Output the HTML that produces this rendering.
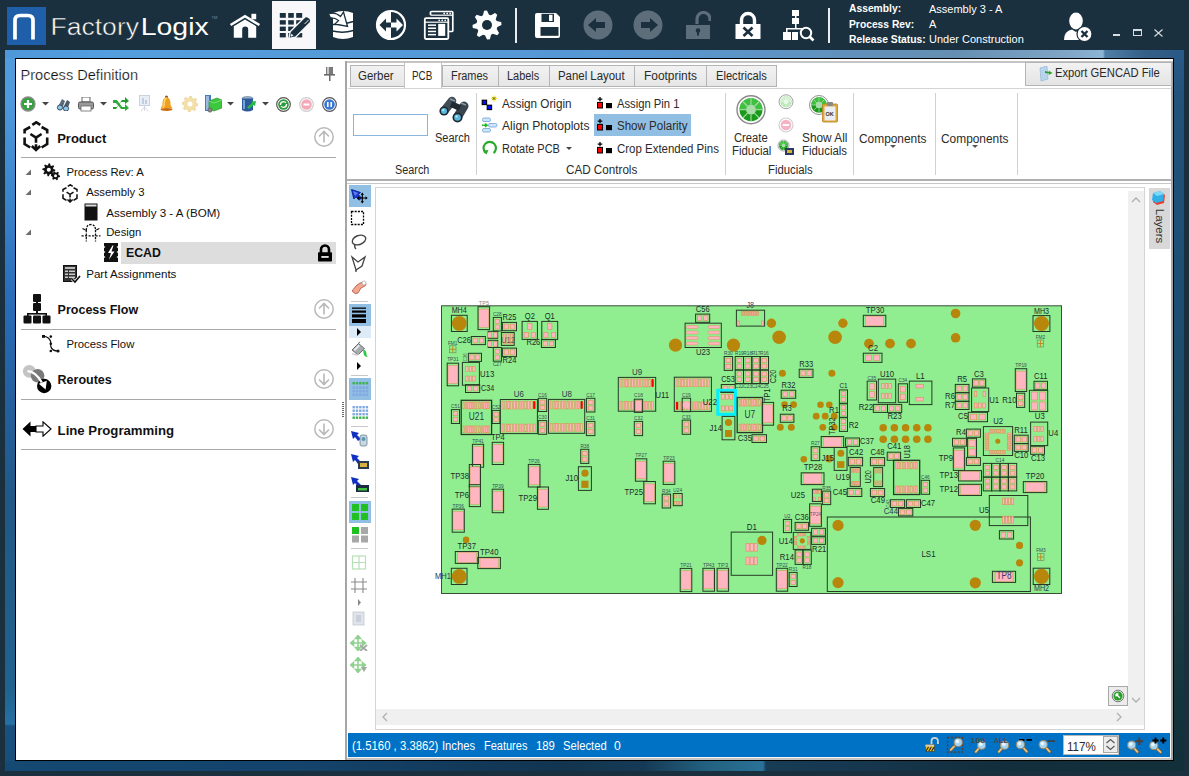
<!DOCTYPE html>
<html><head><meta charset="utf-8"><style>
html,body{margin:0;padding:0;}
body{width:1189px;height:776px;position:relative;overflow:hidden;background:#1a303e;font-family:"Liberation Sans", sans-serif;}
svg text{font-family:"Liberation Sans", sans-serif;}
</style></head><body>
<div style="position:absolute;left:5px;top:50px;width:1179px;height:721px;background:#245a92;"></div><div style="position:absolute;left:5px;top:50px;width:10px;height:721px;background:linear-gradient(180deg,#519cdc 0px,#4f9adc 50px,#3a84ca 150px,#296cb8 250px,#24609e 350px,#225886 450px,#215e8a 560px,#20638e 640px,#2670a2 674px,#19507e 676px,#194e7a 721px);"></div><div style="position:absolute;left:5px;top:50px;width:1179px;height:8px;background:linear-gradient(90deg,#4e98da 0px,#539ede 99px,#5697d4 599px,#658fb2 949px,#7ea5c6 1059px,#8cb4d4 1098px,#4f7fa8 1100px,#356088 1139px,#2a5682 1179px);"></div><div style="position:absolute;left:1174px;top:50px;width:10px;height:721px;background:linear-gradient(180deg,#2a5a88 0px,#22527a 50px,#1c4e72 250px,#1d4a60 400px,#1e3e46 550px,#12323c 670px,#12303a 721px);"></div><div style="position:absolute;left:5px;top:761px;width:1179px;height:10px;background:linear-gradient(90deg,#154a74 0px,#144870 39px,#14436c 295px,#12344f 559px,#163a55 639px,#22607f 700px,#2a7298 758px,#173c54 761px,#163850 839px,#132e3c 999px,#12303a 1179px);"></div><div style="position:absolute;left:15px;top:58px;width:1159px;height:703px;background:#fff;border:1px solid #000;box-sizing:border-box;"></div><div style="position:absolute;left:7px;top:7px;width:39px;height:38px;background:#1f5fa9;"></div><svg style="position:absolute;left:7px;top:7px;" width="39" height="38" viewBox="0 0 39 38"><path d="M8 32.5 V13.5 Q8 8.5 13 8.5 H21 Q26 8.5 26 13.5 V32.5" fill="none" stroke="#fff" stroke-width="3.7"/></svg><svg style="position:absolute;left:48px;top:10px" width="175" height="34" viewBox="0 0 175 34"><text x="2.5" y="24.8" font-size="23" fill="#fff" stroke="#1a303e" stroke-width="0.5" textLength="88.5" lengthAdjust="spacingAndGlyphs">Factory</text><text x="92.7" y="24.8" font-size="23" fill="#fff" textLength="68" lengthAdjust="spacingAndGlyphs">Logix</text><text x="163.5" y="9" font-size="4" fill="#889">TM</text></svg><svg style="position:absolute;left:229px;top:12px;" width="32" height="27" viewBox="0 0 32 27"><path d="M1.6 13 L16 4.2 L30.4 13" fill="none" stroke="#ffffff" stroke-width="2.6" stroke-linejoin="miter"/><rect x="22.4" y="1.8" width="4.8" height="5.5" fill="#ffffff"/><path d="M4.8 14.2 L16 7.6 L27.2 14.2 V25.8 H19.2 V17.5 Q19.2 14.6 16.2 14.6 Q13.2 14.6 13.2 17.5 V25.8 H4.8 Z" fill="#ffffff"/></svg><div style="position:absolute;left:272px;top:1px;width:44px;height:48px;background:#f8f8fb;"></div><svg style="position:absolute;left:279px;top:12px;" width="33" height="28" viewBox="0 0 33 28"><rect x="0.8" y="1" width="6.0" height="4.8" fill="#1a303e"/><rect x="0.8" y="8.2" width="6.0" height="4.4" fill="#1a303e"/><rect x="0.8" y="14.6" width="6.0" height="4.4" fill="#1a303e"/><rect x="0.8" y="21" width="6.0" height="4.4" fill="#1a303e"/><rect x="9.2" y="1" width="5.6" height="4.8" fill="#1a303e"/><rect x="9.2" y="8.2" width="5.6" height="4.4" fill="#1a303e"/><rect x="9.2" y="14.6" width="5.6" height="4.4" fill="#1a303e"/><rect x="9.2" y="21" width="5.6" height="4.4" fill="#1a303e"/><rect x="17.2" y="1" width="6.0" height="4.8" fill="#1a303e"/><rect x="17.2" y="8.2" width="6.0" height="4.4" fill="#1a303e"/><rect x="17.2" y="14.6" width="6.0" height="4.4" fill="#1a303e"/><rect x="17.2" y="21" width="6.0" height="4.4" fill="#1a303e"/><path d="M10.8 25.6 L16.29 24.47 L30.85 10.08 Q31.5 8.5 30.5 7.2 L29.5 6.2 Q28 5 26.35 5.53 L11.79 19.92 Z" fill="#f8f8fb" stroke="#f8f8fb" stroke-width="2.6" stroke-linejoin="round"/><path d="M10.8 25.6 L16.29 24.47 L30.85 10.08 Q31.5 8.5 30.5 7.2 L29.5 6.2 Q28 5 26.35 5.53 L11.79 19.92 Z" fill="#1a303e"/><path d="M25.6 12 L29.6 8" stroke="#f8f8fb" stroke-width="0.9"/><path d="M10.8 25.6 L12.6 21.8 L14.4 23.6 Z" fill="#f8f8fb"/><path d="M10.8 25.6 L11.6 23.8 L12.5 24.7 Z" fill="#1a303e"/></svg><svg style="position:absolute;left:328px;top:9px;" width="27" height="31" viewBox="0 0 27 31"><path d="M5 4 Q15 0 25 4 V28 Q15 32 5 28 Z" fill="#ffffff"/><path d="M4.5 15.5 Q15 16 25.5 12.5 M4.5 22 Q15 24.5 25.5 21.5" fill="none" stroke="#1a303e" stroke-width="1.5"/><path d="M0.5 5 Q7 2.5 12.5 7.5 L15.5 3 L19.5 17.5 L7 15 L10.5 11.5 Q6.5 8.5 2.5 9 Z" fill="#ffffff" stroke="#1a303e" stroke-width="1.3" stroke-linejoin="miter"/></svg><svg style="position:absolute;left:375px;top:9px;" width="32" height="32" viewBox="0 0 32 32"><circle cx="16" cy="16" r="14" fill="none" stroke="#ffffff" stroke-width="2.2"/><path d="M16 2 A14 14 0 0 0 16 30 Z" fill="#ffffff"/><path d="M4.5 16 L11 9.5 V13.5 H16 V18.5 H11 V22.5 Z" fill="#1a303e"/><path d="M28 16 L21.5 9.5 V13.5 H16 V18.5 H21.5 V22.5 Z" fill="#ffffff"/></svg><svg style="position:absolute;left:423px;top:9px;" width="32" height="32" viewBox="0 0 32 32"><path d="M7.5 6 V3.5 Q7.5 2.5 8.5 2.5 H28.8 Q29.8 2.5 29.8 3.5 V21.5 Q29.8 22.5 28.8 22.5 H26" fill="none" stroke="#ffffff" stroke-width="1.7"/><path d="M7.5 6.2 H29.8" stroke="#ffffff" stroke-width="1.2"/><circle cx="21.2" cy="4.4" r="0.9" fill="#ffffff"/><circle cx="24.2" cy="4.4" r="0.9" fill="#ffffff"/><circle cx="27.2" cy="4.4" r="0.9" fill="#ffffff"/><rect x="1.8" y="9.2" width="23.5" height="20.8" rx="1.2" fill="#1a303e" stroke="#ffffff" stroke-width="1.8"/><path d="M1.8 13.2 H25.3" stroke="#ffffff" stroke-width="1.2"/><circle cx="16.2" cy="11.3" r="0.9" fill="#ffffff"/><circle cx="19.2" cy="11.3" r="0.9" fill="#ffffff"/><circle cx="22.2" cy="11.3" r="0.9" fill="#ffffff"/><rect x="5" y="15.4" width="8" height="1.5" fill="#ffffff"/><rect x="5" y="18.5" width="8" height="1.5" fill="#ffffff"/><rect x="5" y="21.7" width="8" height="1.5" fill="#ffffff"/><rect x="5" y="24.9" width="8" height="1.5" fill="#ffffff"/><rect x="15.2" y="14.9" width="7" height="12" fill="#ffffff"/></svg><svg style="position:absolute;left:472px;top:10px;" width="30" height="30" viewBox="0 0 30 30"><polygon points="29.21,12.12 29.50,14.95 25.31,17.01 24.72,18.98 27.09,23.01 25.29,25.22 20.87,23.71 19.05,24.69 17.88,29.21 15.05,29.50 12.99,25.31 11.02,24.72 6.99,27.09 4.78,25.29 6.29,20.87 5.31,19.05 0.79,17.88 0.50,15.05 4.69,12.99 5.28,11.02 2.91,6.99 4.71,4.78 9.13,6.29 10.95,5.31 12.12,0.79 14.95,0.50 17.01,4.69 18.98,5.28 23.01,2.91 25.22,4.71 23.71,9.13 24.69,10.95" fill="#ffffff"/><circle cx="15" cy="15" r="5" fill="#1a303e"/></svg><div style="position:absolute;left:515px;top:8px;width:1.5px;height:35px;background:#e8ecf0;"></div><svg style="position:absolute;left:535px;top:13px;" width="26" height="25" viewBox="0 0 26 25"><path d="M0 2 Q0 0 2 0 H21 L25 4 V23 Q25 25 23 25 H2 Q0 25 0 23 Z" fill="#ffffff"/><rect x="6.5" y="0.8" width="12.5" height="8.2" fill="#1a303e"/><rect x="14" y="1.8" width="3.5" height="6.2" fill="#ffffff"/><rect x="5.5" y="14" width="18" height="8.8" fill="#1a303e"/></svg><svg style="position:absolute;left:583px;top:10px;" width="30" height="30" viewBox="0 0 30 30"><circle cx="15" cy="15" r="14.5" fill="#5d6d7a"/><path d="M5 15 L13 8 V12 H22 V18 H13 V22 Z" fill="#1a303e"/></svg><svg style="position:absolute;left:633px;top:10px;" width="30" height="30" viewBox="0 0 30 30"><circle cx="15" cy="15" r="14.5" fill="#5d6d7a"/><path d="M25 15 L17 8 V12 H8 V18 H17 V22 Z" fill="#1a303e"/></svg><svg style="position:absolute;left:685px;top:11px;" width="26" height="29" viewBox="0 0 26 29"><path d="M12 13 V8 A6.5 6.5 0 0 1 25 8 V10" fill="none" stroke="#5d6d7a" stroke-width="3.2"/><rect x="1" y="14" width="24" height="14" fill="#5d6d7a"/><circle cx="13" cy="19.5" r="2.3" fill="#1a303e"/><rect x="12" y="20" width="2" height="4.5" fill="#1a303e"/></svg><svg style="position:absolute;left:735px;top:11px;" width="26" height="29" viewBox="0 0 26 29"><path d="M6.5 14 V9 A6.5 6.5 0 0 1 19.5 9 V14" fill="none" stroke="#ffffff" stroke-width="3.4"/><rect x="0.5" y="13" width="25" height="15" fill="#ffffff"/><path d="M8.5 16.5 L17.5 25 M17.5 16.5 L8.5 25" stroke="#1a303e" stroke-width="2.6"/></svg><svg style="position:absolute;left:782px;top:9px;" width="33" height="33" viewBox="0 0 33 33"><rect x="10" y="1" width="7" height="6" fill="#ffffff"/><rect x="10" y="9" width="7" height="6" fill="#ffffff"/><rect x="13" y="7" width="1.5" height="2" fill="#ffffff"/><rect x="13" y="15" width="1.5" height="4" fill="#ffffff"/><rect x="4" y="19" width="16" height="1.5" fill="#ffffff"/><rect x="4" y="19" width="1.5" height="4" fill="#ffffff"/><rect x="1" y="23" width="8" height="8" fill="#ffffff"/><rect x="10" y="23" width="6" height="8" fill="#ffffff"/><circle cx="24" cy="24" r="5.2" fill="#1a303e" stroke="#ffffff" stroke-width="2"/><path d="M27.5 27.5 L31.5 31.5" stroke="#ffffff" stroke-width="2.6"/></svg><div style="position:absolute;left:828px;top:8px;width:1.5px;height:35px;background:#e8ecf0;"></div><div style="position:absolute;top:4.18px;font-size:10.3px;line-height:10.3px;color:#fff;font-weight:bold;white-space:nowrap;left:849px;">Assembly:</div><div style="position:absolute;top:19.68px;font-size:10.3px;line-height:10.3px;color:#fff;font-weight:bold;white-space:nowrap;left:849px;">Process Rev:</div><div style="position:absolute;top:34.68px;font-size:10.3px;line-height:10.3px;color:#fff;font-weight:bold;white-space:nowrap;left:849px;">Release Status:</div><div style="position:absolute;top:3.59px;font-size:11px;line-height:11px;color:#fff;font-weight:normal;white-space:nowrap;left:929px;">Assembly 3 - A</div><div style="position:absolute;top:19.09px;font-size:11px;line-height:11px;color:#fff;font-weight:normal;white-space:nowrap;left:929px;">A</div><div style="position:absolute;top:34.09px;font-size:11px;line-height:11px;color:#fff;font-weight:normal;white-space:nowrap;left:929px;">Under Construction</div><svg style="position:absolute;left:1063px;top:12px;" width="30" height="30" viewBox="0 0 30 30"><ellipse cx="13" cy="9" rx="6.8" ry="8.5" fill="#ffffff"/><path d="M1 28 Q1 19 9 17.5 L13 20 L17 17.5 Q22 18.5 24 22 L22 28 Z" fill="#ffffff"/><circle cx="21.5" cy="22" r="7.5" fill="#ffffff" stroke="#1a303e" stroke-width="1.2"/><path d="M18.5 19 L24.5 25 M24.5 19 L18.5 25" stroke="#1a303e" stroke-width="2.4"/></svg><div style="position:absolute;left:1113px;top:34px;width:7px;height:2px;background:#d8dce0;"></div><div style="position:absolute;left:1133px;top:29px;width:9px;height:7px;border:1.3px solid #d8dce0;border-top-width:2.2px;box-sizing:border-box;"></div><svg style="position:absolute;left:1154px;top:29px;" width="9" height="8" viewBox="0 0 9 8"><path d="M0.5 0.5 L8.5 7.5 M8.5 0.5 L0.5 7.5" stroke="#d8dce0" stroke-width="1.1"/></svg><svg style="position:absolute;left:18px;top:64px" width="130" height="22"><text x="2.5" y="16.2" font-size="15" fill="#111" stroke="#fff" stroke-width="0.22" textLength="117.5" lengthAdjust="spacingAndGlyphs">Process Definition</text></svg><svg style="position:absolute;left:323px;top:67px;" width="13" height="14" viewBox="0 0 13 14"><rect x="3" y="0" width="7" height="7" fill="#7a7a7a"/><rect x="4" y="0" width="2" height="7" fill="#c8c8c8"/><rect x="1" y="7" width="11" height="1.6" fill="#6a6a6a"/><rect x="6" y="8" width="1.5" height="6" fill="#6a6a6a"/></svg><svg style="position:absolute;left:20px;top:96px;" width="16" height="16" viewBox="0 0 16 16"><circle cx="8" cy="8" r="7" fill="#3aa040" stroke="#8a8a8a" stroke-width="1.3"/><path d="M8 4 V12 M4 8 H12" stroke="#fff" stroke-width="2.2"/></svg><svg style="position:absolute;left:42px;top:102px;" width="7" height="4" viewBox="0 0 7 4"><path d="M0 0 H7 L3.5 3.5 Z" fill="#444"/></svg><svg style="position:absolute;left:56px;top:97px;" width="15" height="14" viewBox="0 0 15 14"><path d="M2 10 L6 2 L9 4 L6 12 Z" fill="#5a6a7a"/><path d="M7 11 L11 3 L14 5 L11 13 Z" fill="#4a5a6a"/><circle cx="4" cy="10.5" r="2.6" fill="#8ec8ec" stroke="#3a4a5a" stroke-width="1"/><circle cx="10" cy="11.5" r="2.6" fill="#8ec8ec" stroke="#3a4a5a" stroke-width="1"/></svg><svg style="position:absolute;left:78px;top:97px;" width="16" height="15" viewBox="0 0 16 15"><rect x="4" y="0" width="8" height="5" fill="#fff" stroke="#666" stroke-width="1"/><rect x="0.5" y="5" width="15" height="7" rx="1.5" fill="#9a9a9a" stroke="#555" stroke-width="1"/><rect x="3" y="9" width="10" height="5" fill="#fff" stroke="#666" stroke-width="0.8"/></svg><svg style="position:absolute;left:100px;top:102px;" width="7" height="4" viewBox="0 0 7 4"><path d="M0 0 H7 L3.5 3.5 Z" fill="#444"/></svg><svg style="position:absolute;left:113px;top:97px;" width="16" height="14" viewBox="0 0 16 14"><path d="M0 3 H4 L9 10 H12 V7 L16 11 L12 14 V12 H8 L3 6 H0 Z" fill="#2eaa3a"/><path d="M0 10 H4 L9 3 H12 V0 L16 4 L12 7 V5 H8 L3 12 H0 Z" fill="#22992e"/></svg><svg style="position:absolute;left:139px;top:95px;" width="11" height="17" viewBox="0 0 11 17"><rect x="0.5" y="0.5" width="10" height="10" fill="#e8eef4" stroke="#c8d4e0"/><rect x="3" y="3" width="2" height="6" fill="#c0cfe0"/><rect x="6" y="5" width="2" height="4" fill="#c0cfe0"/><path d="M5.5 10.5 V16 M5.5 12 L2 16 M5.5 12 L9 16" stroke="#ccd" stroke-width="0.8"/></svg><svg style="position:absolute;left:160px;top:95px;" width="13" height="17" viewBox="0 0 13 17"><circle cx="6.5" cy="2" r="1.6" fill="#8a5a20"/><path d="M6.5 2 Q2 3 2.5 10 L0.5 13.5 H12.5 L10.5 10 Q11 3 6.5 2 Z" fill="#f0a020"/><path d="M6.5 3 Q4 4 4.2 10 L3 13" stroke="#ffd870" stroke-width="1.4" fill="none"/><ellipse cx="6.5" cy="14.5" rx="6" ry="1.5" fill="#c86a10"/></svg><svg style="position:absolute;left:182px;top:96px;" width="16" height="16" viewBox="0 0 16 16"><polygon points="16.00,8.00 15.85,9.56 13.36,10.22 12.82,11.22 13.66,13.66 12.44,14.65 10.22,13.36 9.13,13.69 8.00,16.00 6.44,15.85 5.78,13.36 4.78,12.82 2.34,13.66 1.35,12.44 2.64,10.22 2.31,9.13 0.00,8.00 0.15,6.44 2.64,5.78 3.18,4.78 2.34,2.34 3.56,1.35 5.78,2.64 6.87,2.31 8.00,0.00 9.56,0.15 10.22,2.64 11.22,3.18 13.66,2.34 14.65,3.56 13.36,5.78 13.69,6.87" fill="#f5dfa8" stroke="#e8cc88" stroke-width="0.6"/><circle cx="8" cy="8" r="2.5" fill="#fff"/></svg><svg style="position:absolute;left:204px;top:95px;" width="18" height="18" viewBox="0 0 18 18"><rect x="1" y="0" width="6" height="16" fill="#4a7ac0"/><rect x="2" y="1" width="3" height="14" fill="#9ab8e0"/><path d="M5 6 L13 3 L18 5 V13 L10 16 L5 14 Z" fill="#3cc83c" stroke="#2a8a2a" stroke-width="0.6"/><path d="M5 6 L10 8 L18 5" stroke="#8ae08a" stroke-width="0.8" fill="none"/><circle cx="6" cy="15" r="2.2" fill="#888" stroke="#555" stroke-width="0.6"/></svg><svg style="position:absolute;left:226.6px;top:102px;" width="7" height="4" viewBox="0 0 7 4"><path d="M0 0 H7 L3.5 3.5 Z" fill="#444"/></svg><svg style="position:absolute;left:241px;top:96px;" width="15" height="17" viewBox="0 0 15 17"><ellipse cx="6.5" cy="2.5" rx="5.5" ry="2" fill="#9ab0c8" stroke="#5a7090" stroke-width="0.6"/><path d="M1 2.5 V14 Q6.5 17 12 14 V2.5" fill="#2a5a9a"/><path d="M3 4 V13" stroke="#8ac0f0" stroke-width="1.5"/><path d="M6 11 L11 7 L10 5.5 L15 5 L14 10 L12.5 9 L8 13 Z" fill="#2ab84a"/></svg><svg style="position:absolute;left:262px;top:102px;" width="7" height="4" viewBox="0 0 7 4"><path d="M0 0 H7 L3.5 3.5 Z" fill="#444"/></svg><svg style="position:absolute;left:276px;top:97px;" width="15" height="15" viewBox="0 0 15 15"><circle cx="7.5" cy="7.5" r="6.8" fill="none" stroke="#555" stroke-width="1.2"/><circle cx="7.5" cy="7.5" r="5.3" fill="#2a9a3a"/><path d="M4.5 8 A3 3 0 0 1 10 6 M10.5 7 A3 3 0 0 1 5 9" stroke="#fff" stroke-width="1.3" fill="none"/></svg><svg style="position:absolute;left:299px;top:97px;" width="15" height="15" viewBox="0 0 15 15"><circle cx="7.5" cy="7.5" r="6.8" fill="none" stroke="#ccc" stroke-width="1.2"/><circle cx="7.5" cy="7.5" r="5.3" fill="#f4a8b8"/><rect x="4.5" y="6.5" width="6" height="2" fill="#fff"/></svg><svg style="position:absolute;left:322px;top:97px;" width="15" height="15" viewBox="0 0 15 15"><circle cx="7.5" cy="7.5" r="6.8" fill="none" stroke="#555" stroke-width="1.2"/><circle cx="7.5" cy="7.5" r="5.3" fill="#3a78d8"/><rect x="5" y="5" width="1.6" height="5" fill="#fff"/><rect x="8.4" y="5" width="1.6" height="5" fill="#fff"/></svg><svg style="position:absolute;left:23px;top:121px;" width="27" height="31" viewBox="0 0 27 31"><g transform="scale(1)" fill="none" stroke="#111" stroke-width="2.6" stroke-linejoin="miter"><path d="M9.3 3.9 L13.3 1.3 L17.3 3.9"/><path d="M7.2 6 L1.6 9 V12.6"/><path d="M18.6 6 L24.2 9 V12.6"/><path d="M1.6 16.5 V23 L7.2 26.5"/><path d="M24.2 16.5 V23 L18.6 26.5"/><path d="M7.4 13 L13 16.6 L18.6 13 M13 16.6 V21.8"/><path d="M8.8 25 L13 29 L17.2 25 M13 23.2 V28.6"/></g></svg><div style="position:absolute;top:131.60px;font-size:13px;line-height:13px;color:#111;font-weight:bold;white-space:nowrap;left:57.2px;">Product</div><svg style="position:absolute;left:314px;top:127px;" width="20" height="20" viewBox="0 0 20 20"><circle cx="10" cy="10" r="9.2" fill="none" stroke="#b8b8b8" stroke-width="1.5"/><path d="M10 15.5 V4.5 M5 9.5 L10 4.5 L15 9.5" stroke="#b8b8b8" stroke-width="1.6" fill="none"/></svg><div style="position:absolute;left:21px;top:157px;width:315px;height:1px;background:#a8a8a8;"></div><svg style="position:absolute;left:25px;top:169px;" width="7" height="7" viewBox="0 0 7 7"><path d="M6 0.5 V6 H0.5 Z" fill="#6e6e6e"/></svg><svg style="position:absolute;left:42px;top:163px;" width="19" height="18" viewBox="0 0 19 18"><polygon points="13.30,6.80 13.18,8.07 11.05,8.56 10.62,9.36 11.40,11.40 10.41,12.20 8.56,11.05 7.70,11.31 6.80,13.30 5.53,13.18 5.04,11.05 4.24,10.62 2.20,11.40 1.40,10.41 2.55,8.56 2.29,7.70 0.30,6.80 0.42,5.53 2.55,5.04 2.98,4.24 2.20,2.20 3.19,1.40 5.04,2.55 5.90,2.29 6.80,0.30 8.07,0.42 8.56,2.55 9.36,2.98 11.40,2.20 12.20,3.19 11.05,5.04 11.31,5.90" fill="#111"/><circle cx="6.8" cy="6.8" r="2" fill="#fff"/><polygon points="18.10,12.80 17.94,13.99 16.27,14.40 15.76,15.06 15.80,16.78 14.69,17.24 13.50,16.00 12.67,15.89 11.20,16.78 10.25,16.05 10.73,14.40 10.41,13.63 8.90,12.80 9.06,11.61 10.73,11.20 11.24,10.54 11.20,8.82 12.31,8.36 13.50,9.60 14.33,9.71 15.80,8.82 16.75,9.55 16.27,11.20 16.59,11.97" fill="#111"/><circle cx="13.5" cy="12.8" r="1.5" fill="#fff"/></svg><div style="position:absolute;top:166.93px;font-size:11.3px;line-height:11.3px;color:#111;font-weight:normal;white-space:nowrap;left:66.5px;">Process Rev: A</div><svg style="position:absolute;left:25px;top:189px;" width="7" height="7" viewBox="0 0 7 7"><path d="M6 0.5 V6 H0.5 Z" fill="#6e6e6e"/></svg><svg style="position:absolute;left:62px;top:184px;" width="16.74" height="19.22" viewBox="0 0 16.74 19.22"><g transform="scale(0.62)" fill="none" stroke="#111" stroke-width="2.5" stroke-linejoin="miter"><path d="M9.3 3.9 L13.3 1.3 L17.3 3.9"/><path d="M7.2 6 L1.6 9 V12.6"/><path d="M18.6 6 L24.2 9 V12.6"/><path d="M1.6 16.5 V23 L7.2 26.5"/><path d="M24.2 16.5 V23 L18.6 26.5"/><path d="M7.4 13 L13 16.6 L18.6 13 M13 16.6 V21.8"/><path d="M8.8 25 L13 29 L17.2 25 M13 23.2 V28.6"/></g></svg><div style="position:absolute;top:187.43px;font-size:11.3px;line-height:11.3px;color:#111;font-weight:normal;white-space:nowrap;left:86.2px;">Assembly 3</div><svg style="position:absolute;left:84px;top:203px;" width="15" height="18" viewBox="0 0 15 18"><rect x="0.5" y="0.5" width="13" height="17" fill="#111"/><rect x="1.5" y="1.5" width="11" height="2" fill="#ddd"/></svg><div style="position:absolute;top:207.18px;font-size:11.6px;line-height:11.6px;color:#111;font-weight:normal;white-space:nowrap;left:106.2px;">Assembly 3 - A (BOM)</div><svg style="position:absolute;left:25px;top:229px;" width="7" height="7" viewBox="0 0 7 7"><path d="M6 0.5 V6 H0.5 Z" fill="#6e6e6e"/></svg><svg style="position:absolute;left:81px;top:222px;" width="20" height="20" viewBox="0 0 20 20"><g stroke="#111" stroke-width="1.3" fill="none"><path d="M5.3 8 V19.5 M14.5 8 V19.5 M0.5 13.8 H19.5" stroke-dasharray="2.2 1.3"/><path d="M5.3 8.5 Q5.3 2.5 9.9 2.5 Q14.5 2.5 14.5 8.5" stroke-dasharray="2.2 1.2"/><path d="M1.5 6.5 L4.5 8 M18.3 6.5 L15.3 8"/></g></svg><div style="position:absolute;top:226.83px;font-size:11.3px;line-height:11.3px;color:#111;font-weight:normal;white-space:nowrap;left:106.2px;">Design</div><div style="position:absolute;left:121px;top:242px;width:215px;height:22px;background:#dddddd;"></div><svg style="position:absolute;left:104px;top:243px;" width="14" height="19" viewBox="0 0 14 19"><path d="M0 0 H14 V3 L12.5 4 L14 5 V8 L12.5 9 L14 10 V13 L12.5 14 L14 15 V19 H0 V15 L1.5 14 L0 13 V10 L1.5 9 L0 8 V5 L1.5 4 L0 3 Z" fill="#111"/><path d="M8.5 2.5 L4 10 H7 L5 16.5 L10.5 8.5 H7.5 L9.5 2.5 Z" fill="#fff"/></svg><div style="position:absolute;top:246.89px;font-size:12.3px;line-height:12.3px;color:#111;font-weight:bold;white-space:nowrap;left:126px;">ECAD</div><svg style="position:absolute;left:317px;top:243px;" width="16" height="19" viewBox="0 0 16 19"><path d="M4 10 V6.5 A4 4 0 0 1 12 6.5 V10" fill="none" stroke="#000" stroke-width="2.6"/><rect x="1" y="9.3" width="14" height="9.3" rx="0.8" fill="#000"/><rect x="4.3" y="13" width="7.4" height="1.9" fill="#ddd"/></svg><svg style="position:absolute;left:63px;top:265px;" width="18" height="19" viewBox="0 0 18 19"><rect x="0.5" y="0.5" width="13" height="16" fill="#333" stroke="#111"/><rect x="2" y="2" width="10" height="2" fill="#bbb"/><g fill="#ccc"><rect x="2" y="5.5" width="3" height="1.5"/><rect x="6" y="5.5" width="6" height="1.5"/><rect x="2" y="8.5" width="3" height="1.5"/><rect x="6" y="8.5" width="6" height="1.5"/><rect x="2" y="11.5" width="3" height="1.5"/><rect x="6" y="11.5" width="6" height="1.5"/></g><path d="M9 14 L12 17 L17 11" stroke="#fff" stroke-width="3" fill="none"/><path d="M9 14 L12 17 L17 11" stroke="#111" stroke-width="1.6" fill="none"/></svg><div style="position:absolute;top:268.18px;font-size:11.6px;line-height:11.6px;color:#111;font-weight:normal;white-space:nowrap;left:86.2px;">Part Assignments</div><svg style="position:absolute;left:23.3px;top:294px;" width="30" height="30" viewBox="0 0 30 30"><rect x="10" y="0" width="8" height="8" rx="1" fill="#111"/><rect x="10" y="9" width="8" height="8" rx="1" fill="#111"/><rect x="13" y="8" width="2" height="1" fill="#111"/><rect x="13" y="17" width="2" height="3" fill="#111"/><rect x="4" y="19" width="20" height="1.6" fill="#111"/><rect x="4" y="19" width="1.6" height="3" fill="#111"/><rect x="22.4" y="19" width="1.6" height="3" fill="#111"/><rect x="0.5" y="21.5" width="8" height="8" rx="1" fill="#111"/><rect x="10" y="21.5" width="8" height="8" rx="1" fill="#111"/><rect x="19.5" y="21.5" width="8" height="8" rx="1" fill="#111"/></svg><div style="position:absolute;top:304.42px;font-size:12.5px;line-height:12.5px;color:#111;font-weight:bold;white-space:nowrap;left:57.6px;">Process Flow</div><svg style="position:absolute;left:314px;top:299px;" width="20" height="20" viewBox="0 0 20 20"><circle cx="10" cy="10" r="9.2" fill="none" stroke="#b8b8b8" stroke-width="1.5"/><path d="M10 15.5 V4.5 M5 9.5 L10 4.5 L15 9.5" stroke="#b8b8b8" stroke-width="1.6" fill="none"/></svg><div style="position:absolute;left:21px;top:329px;width:315px;height:1px;background:#a8a8a8;"></div><svg style="position:absolute;left:42px;top:334px;" width="19" height="20" viewBox="0 0 19 20"><path d="M1.5 2.4 Q7 2.6 8.6 7.5 L8.8 12.5 Q10 17 16 17" fill="none" stroke="#111" stroke-width="1.2"/><rect x="0" y="1" width="3" height="2.8" fill="#111"/><circle cx="8.8" cy="2.6" r="1.3" fill="#111"/><circle cx="8.8" cy="9.7" r="1.3" fill="#111"/><circle cx="8.8" cy="17" r="1.3" fill="#111"/><circle cx="16" cy="17" r="1.6" fill="#111"/></svg><div style="position:absolute;top:338.73px;font-size:11.3px;line-height:11.3px;color:#111;font-weight:normal;white-space:nowrap;left:66.5px;">Process Flow</div><svg style="position:absolute;left:22px;top:364px;" width="30" height="30" viewBox="0 0 30 30"><circle cx="7.3" cy="7.3" r="6.4" fill="#c4c4c4"/><circle cx="15.6" cy="11.7" r="6.8" fill="#7a7a7a"/><circle cx="22.2" cy="22" r="7.2" fill="#000"/><path d="M5.5 7.2 Q13.5 7.5 19.8 18.5" stroke="#fff" stroke-width="2.3" fill="none"/><path d="M16.8 19.8 L24.8 16.8 L23.6 25.6 Z" fill="#fff"/></svg><div style="position:absolute;top:373.52px;font-size:12.5px;line-height:12.5px;color:#111;font-weight:bold;white-space:nowrap;left:57.6px;">Reroutes</div><svg style="position:absolute;left:314px;top:369px;" width="20" height="20" viewBox="0 0 20 20"><circle cx="10" cy="10" r="9.2" fill="none" stroke="#b8b8b8" stroke-width="1.5"/><path d="M10 4.5 V15.5 M5 10.5 L10 15.5 L15 10.5" stroke="#b8b8b8" stroke-width="1.6" fill="none"/></svg><div style="position:absolute;left:21px;top:399px;width:315px;height:1px;background:#a8a8a8;"></div><svg style="position:absolute;left:22px;top:421px;" width="30" height="16" viewBox="0 0 30 16"><path d="M0.5 8 L8.5 0.5 V5 H15 V11 H8.5 V15.5 Z" fill="#000"/><path d="M29 8 L21 0.8 V5 H14 V11 H21 V15.2 Z" fill="#fff" stroke="#000" stroke-width="1.1"/></svg><div style="position:absolute;top:423.83px;font-size:13.2px;line-height:13.2px;color:#111;font-weight:bold;white-space:nowrap;left:57.6px;">Line Programming</div><svg style="position:absolute;left:314px;top:419px;" width="20" height="20" viewBox="0 0 20 20"><circle cx="10" cy="10" r="9.2" fill="none" stroke="#b8b8b8" stroke-width="1.5"/><path d="M10 4.5 V15.5 M5 10.5 L10 15.5 L15 10.5" stroke="#b8b8b8" stroke-width="1.6" fill="none"/></svg><div style="position:absolute;left:21px;top:449px;width:315px;height:1px;background:#a8a8a8;"></div><div style="position:absolute;left:345px;top:61px;width:2px;height:699px;background:#a6a6a6;"></div><div style="position:absolute;left:342px;top:402px;width:2px;height:1px;background:#666;"></div><div style="position:absolute;left:342px;top:404px;width:2px;height:1px;background:#666;"></div><div style="position:absolute;left:342px;top:406px;width:2px;height:1px;background:#666;"></div><div style="position:absolute;left:342px;top:408px;width:2px;height:1px;background:#666;"></div><div style="position:absolute;left:342px;top:410px;width:2px;height:1px;background:#666;"></div><div style="position:absolute;left:342px;top:412px;width:2px;height:1px;background:#666;"></div><div style="position:absolute;left:342px;top:414px;width:2px;height:1px;background:#666;"></div><div style="position:absolute;left:342px;top:416px;width:2px;height:1px;background:#666;"></div><div style="position:absolute;left:347px;top:61px;width:826px;height:2px;background:#c4c4c4;"></div><div style="position:absolute;left:1171px;top:62px;width:2px;height:698px;background:#a6a6a6;"></div><div style="position:absolute;left:350px;top:65px;width:55px;height:22px;background:linear-gradient(#f2f2f2,#e6e6e6);border:1px solid #b4b4b4;box-sizing:border-box;"></div><div style="position:absolute;left:404px;top:62px;width:38px;height:26px;background:#fff;border:1px solid #c4c4c4;border-bottom:none;box-sizing:border-box;"></div><div style="position:absolute;left:442px;top:65px;width:57px;height:22px;background:linear-gradient(#f2f2f2,#e6e6e6);border:1px solid #b4b4b4;box-sizing:border-box;"></div><div style="position:absolute;left:498px;top:65px;width:52px;height:22px;background:linear-gradient(#f2f2f2,#e6e6e6);border:1px solid #b4b4b4;box-sizing:border-box;"></div><div style="position:absolute;left:549px;top:65px;width:86px;height:22px;background:linear-gradient(#f2f2f2,#e6e6e6);border:1px solid #b4b4b4;box-sizing:border-box;"></div><div style="position:absolute;left:634px;top:65px;width:73px;height:22px;background:linear-gradient(#f2f2f2,#e6e6e6);border:1px solid #b4b4b4;box-sizing:border-box;"></div><div style="position:absolute;left:706px;top:65px;width:71px;height:22px;background:linear-gradient(#f2f2f2,#e6e6e6);border:1px solid #b4b4b4;box-sizing:border-box;"></div><svg style="position:absolute;left:357.3px;top:68px" width="39.7" height="16"><text x="1" y="11.8" font-size="12" fill="#2a2a2a" textLength="35.7" lengthAdjust="spacingAndGlyphs">Gerber</text></svg><svg style="position:absolute;left:411px;top:68px" width="24.3" height="16"><text x="1" y="11.8" font-size="12" fill="#2a2a2a" textLength="20.3" lengthAdjust="spacingAndGlyphs">PCB</text></svg><svg style="position:absolute;left:450.4px;top:68px" width="41" height="16"><text x="1" y="11.8" font-size="12" fill="#2a2a2a" textLength="37" lengthAdjust="spacingAndGlyphs">Frames</text></svg><svg style="position:absolute;left:506.4px;top:68px" width="36.2" height="16"><text x="1" y="11.8" font-size="12" fill="#2a2a2a" textLength="32.2" lengthAdjust="spacingAndGlyphs">Labels</text></svg><svg style="position:absolute;left:557.1px;top:68px" width="70.6" height="16"><text x="1" y="11.8" font-size="12" fill="#2a2a2a" textLength="66.6" lengthAdjust="spacingAndGlyphs">Panel Layout</text></svg><svg style="position:absolute;left:642.5px;top:68px" width="56.9" height="16"><text x="1" y="11.8" font-size="12" fill="#2a2a2a" textLength="52.9" lengthAdjust="spacingAndGlyphs">Footprints</text></svg><svg style="position:absolute;left:714.6px;top:68px" width="54.8" height="16"><text x="1" y="11.8" font-size="12" fill="#2a2a2a" textLength="50.8" lengthAdjust="spacingAndGlyphs">Electricals</text></svg><div style="position:absolute;left:1025px;top:62px;width:147px;height:24px;background:linear-gradient(#f2f2f2,#e4e4e4);border:1px solid #b4b4b4;box-sizing:border-box;"></div><svg style="position:absolute;left:1039px;top:66px;" width="14" height="16" viewBox="0 0 14 16"><path d="M1 2 L8 0 L9 13 L2 15 Z" fill="#b8d4ec" stroke="#8ab0d0" stroke-width="0.6"/><path d="M6 5 L10 6 L9.5 4.5 L13.5 7 L9.5 9 L10 7.5 L6 7 Z" fill="#2aa02a"/></svg><svg style="position:absolute;left:1054px;top:65px" width="110" height="16"><text x="1" y="12.4" font-size="12" fill="#2a2a2a" textLength="104.8" lengthAdjust="spacingAndGlyphs">Export GENCAD File</text></svg><div style="position:absolute;left:348px;top:88px;width:823px;height:1px;background:#d4d4d4;"></div><div style="position:absolute;left:347px;top:179px;width:824px;height:2px;background:#b0b0b0;"></div><div style="position:absolute;left:347px;top:183px;width:824px;height:1px;background:#c8c8c8;"></div><div style="position:absolute;left:476px;top:93px;width:1px;height:82px;background:#d0d0d0;"></div><div style="position:absolute;left:725px;top:93px;width:1px;height:82px;background:#d0d0d0;"></div><div style="position:absolute;left:853px;top:93px;width:1px;height:82px;background:#d0d0d0;"></div><div style="position:absolute;left:935px;top:93px;width:1px;height:82px;background:#d0d0d0;"></div><div style="position:absolute;left:1017px;top:93px;width:1px;height:82px;background:#d0d0d0;"></div><div style="position:absolute;left:353px;top:114px;width:75px;height:22px;border:1px solid #8ab6de;box-sizing:border-box;background:#fff;"></div><svg style="position:absolute;left:439px;top:96px;" width="30" height="28" viewBox="0 0 30 28"><path d="M5.5 14.5 L13 5" stroke="#404c56" stroke-width="8.5" stroke-linecap="round"/><path d="M18.5 21 L25 10" stroke="#38444e" stroke-width="9" stroke-linecap="round"/><path d="M12 8 L21 12" stroke="#202a32" stroke-width="6"/><path d="M11 3 L16 5" stroke="#8a98a4" stroke-width="1.5"/><path d="M22 7 L27 9" stroke="#8a98a4" stroke-width="1.5"/><circle cx="5" cy="15" r="4.6" fill="#1e2830"/><circle cx="5" cy="15" r="3" fill="#5ab8e0"/><circle cx="18.5" cy="21.5" r="5" fill="#1e2830"/><circle cx="18.5" cy="21.5" r="3.3" fill="#5ab8e0"/><circle cx="4.2" cy="14" r="1" fill="#c8eefc"/><circle cx="17.5" cy="20.5" r="1.1" fill="#c8eefc"/></svg><svg style="position:absolute;left:434.2px;top:128.7px" width="40.8" height="16"><text x="1" y="12.8" font-size="12" fill="#2a2a2a" textLength="34.8" lengthAdjust="spacingAndGlyphs">Search</text></svg><svg style="position:absolute;left:393.6px;top:160.9px" width="40.4" height="16"><text x="1" y="12.8" font-size="12" fill="#2a2a2a" textLength="34.4" lengthAdjust="spacingAndGlyphs">Search</text></svg><svg style="position:absolute;left:481px;top:95px;" width="18" height="16" viewBox="0 0 18 16"><rect x="1.2" y="5.2" width="4.4" height="4.4" fill="#0010f0" stroke="#000" stroke-width="1.1"/><rect x="6.2" y="10.2" width="4.4" height="4.4" fill="#0010f0" stroke="#000" stroke-width="1.1"/><path d="M10.8 1.5 L15.2 5.5 M15.2 1.5 L10.8 5.5 M13 0.5 V6.5 M10 3.5 H16" stroke="#f0e000" stroke-width="0.9"/><path d="M11.5 2 L14.5 5 M14.5 2 L11.5 5" stroke="#000" stroke-width="0.5"/></svg><svg style="position:absolute;left:500.9px;top:94.75px" width="75.6" height="16"><text x="1" y="12.8" font-size="12" fill="#2a2a2a" textLength="69.6" lengthAdjust="spacingAndGlyphs">Assign Origin</text></svg><svg style="position:absolute;left:481px;top:117px;" width="17" height="16" viewBox="0 0 17 16"><rect x="1.5" y="1" width="8" height="3.5" rx="1.5" fill="#cfe4f8" stroke="#7aaae0" stroke-width="0.9"/><rect x="7.5" y="6.5" width="8.5" height="3.5" rx="1.5" fill="#cfe4f8" stroke="#7aaae0" stroke-width="0.9"/><rect x="1.5" y="11.5" width="8" height="3.5" rx="1.5" fill="#cfe4f8" stroke="#7aaae0" stroke-width="0.9"/><path d="M1 8.3 H6 M4 6.5 L6.2 8.3 L4 10" stroke="#22bb22" stroke-width="1.5" fill="none"/></svg><svg style="position:absolute;left:500.9px;top:117.25px" width="93.5" height="16"><text x="1" y="12.8" font-size="12" fill="#2a2a2a" textLength="87.5" lengthAdjust="spacingAndGlyphs">Align Photoplots</text></svg><svg style="position:absolute;left:482px;top:140px;" width="16" height="15" viewBox="0 0 16 15"><path d="M4 13 A6.2 6.2 0 1 1 11.5 13" fill="none" stroke="#2aaa2a" stroke-width="2.2"/><path d="M1.5 10.5 L4.5 14.5 L6.5 10" fill="#2aaa2a"/></svg><svg style="position:absolute;left:500.9px;top:140.4px" width="63.9" height="16"><text x="1" y="12.8" font-size="12" fill="#2a2a2a" textLength="57.9" lengthAdjust="spacingAndGlyphs">Rotate PCB</text></svg><svg style="position:absolute;left:566px;top:147px;" width="6" height="4" viewBox="0 0 6 4"><path d="M0 0 H6 L3 3 Z" fill="#444"/></svg><div style="position:absolute;left:594px;top:114px;width:97px;height:22px;background:#91bfe4;"></div><svg style="position:absolute;left:597px;top:96.5px;" width="16" height="12" viewBox="0 0 16 12"><path d="M3 0 V4.2 M0.7 2.1 H5.3" stroke="#000" stroke-width="1.3"/><rect x="0.5" y="5.4" width="5" height="5.6" fill="#f00" stroke="#000" stroke-width="1"/><rect x="9" y="6" width="6" height="5.2" fill="#000"/></svg><svg style="position:absolute;left:597px;top:119px;" width="16" height="12" viewBox="0 0 16 12"><path d="M3 0 V4.2 M0.7 2.1 H5.3" stroke="#000" stroke-width="1.3"/><rect x="0.5" y="5.4" width="5" height="5.6" fill="#f00" stroke="#000" stroke-width="1"/><rect x="9" y="6" width="6" height="5.2" fill="#000"/></svg><svg style="position:absolute;left:597px;top:142px;" width="16" height="12" viewBox="0 0 16 12"><path d="M3 0 V4.2 M0.7 2.1 H5.3" stroke="#000" stroke-width="1.3"/><rect x="0.5" y="5.4" width="5" height="5.6" fill="#f00" stroke="#000" stroke-width="1"/><rect x="9" y="6" width="6" height="5.2" fill="#000"/></svg><svg style="position:absolute;left:615.9px;top:94.75px" width="68.5" height="16"><text x="1" y="12.8" font-size="12" fill="#2a2a2a" textLength="62.5" lengthAdjust="spacingAndGlyphs">Assign Pin 1</text></svg><svg style="position:absolute;left:615.9px;top:117.25px" width="76.6" height="16"><text x="1" y="12.8" font-size="12" fill="#2a2a2a" textLength="70.6" lengthAdjust="spacingAndGlyphs">Show Polarity</text></svg><svg style="position:absolute;left:615.9px;top:140.4px" width="107.9" height="16"><text x="1" y="12.8" font-size="12" fill="#2a2a2a" textLength="101.9" lengthAdjust="spacingAndGlyphs">Crop Extended Pins</text></svg><svg style="position:absolute;left:564.6px;top:160.9px" width="77.3" height="16"><text x="1" y="12.8" font-size="12" fill="#2a2a2a" textLength="71.3" lengthAdjust="spacingAndGlyphs">CAD Controls</text></svg><svg style="position:absolute;left:735px;top:94px;" width="32" height="32" viewBox="0 0 32 32"><circle cx="16" cy="15.7" r="14" fill="#fff" stroke="#8a8a8a" stroke-width="1.40"/><circle cx="16" cy="15.7" r="11.48" fill="#1a9a1a"/><path d="M4.52 15.7 A11.48 11.48 0 0 1 27.48 15.7 Z" fill="#40c040"/><path d="M20.90 15.70 L27.48 15.70" stroke="#a8dca8" stroke-width="1.12"/><path d="M19.46 19.16 L24.12 23.82" stroke="#a8dca8" stroke-width="1.12"/><path d="M16.00 20.60 L16.00 27.18" stroke="#a8dca8" stroke-width="1.12"/><path d="M12.54 19.16 L7.88 23.82" stroke="#a8dca8" stroke-width="1.12"/><path d="M11.10 15.70 L4.52 15.70" stroke="#a8dca8" stroke-width="1.12"/><path d="M12.54 12.24 L7.88 7.58" stroke="#a8dca8" stroke-width="1.12"/><path d="M16.00 10.80 L16.00 4.22" stroke="#a8dca8" stroke-width="1.12"/><path d="M19.46 12.24 L24.12 7.58" stroke="#a8dca8" stroke-width="1.12"/><circle cx="16" cy="15.7" r="4.90" fill="#a8dca8"/></svg><svg style="position:absolute;left:777px;top:93px;" width="18" height="18" viewBox="0 0 18 18"><circle cx="9" cy="8.75" r="7" fill="#fff" stroke="#8a8a8a" stroke-width="0.80"/><circle cx="9" cy="8.75" r="5.74" fill="#b8e8b8"/><path d="M3.26 8.75 A5.74 5.74 0 0 1 14.74 8.75 Z" fill="#d0f0d0"/><path d="M11.45 8.75 L14.74 8.75" stroke="#e8f8e8" stroke-width="0.56"/><path d="M10.73 10.48 L13.06 12.81" stroke="#e8f8e8" stroke-width="0.56"/><path d="M9.00 11.20 L9.00 14.49" stroke="#e8f8e8" stroke-width="0.56"/><path d="M7.27 10.48 L4.94 12.81" stroke="#e8f8e8" stroke-width="0.56"/><path d="M6.55 8.75 L3.26 8.75" stroke="#e8f8e8" stroke-width="0.56"/><path d="M7.27 7.02 L4.94 4.69" stroke="#e8f8e8" stroke-width="0.56"/><path d="M9.00 6.30 L9.00 3.01" stroke="#e8f8e8" stroke-width="0.56"/><path d="M10.73 7.02 L13.06 4.69" stroke="#e8f8e8" stroke-width="0.56"/><circle cx="9" cy="8.75" r="2.45" fill="#e8f8e8"/></svg><svg style="position:absolute;left:777px;top:117px;" width="18" height="18" viewBox="0 0 18 18"><circle cx="9" cy="8" r="7" fill="#fff" stroke="#d0d0d0" stroke-width="1.2"/><circle cx="9" cy="8" r="5.3" fill="#f4b4c4"/><rect x="5.8" y="7" width="6.4" height="2" fill="#fff"/></svg><svg style="position:absolute;left:777px;top:139px;" width="18" height="18" viewBox="0 0 18 18"><circle cx="6.5" cy="6.5" r="5.5" fill="#fff" stroke="#8a8a8a" stroke-width="0.80"/><circle cx="6.5" cy="6.5" r="4.51" fill="#1a9a1a"/><path d="M1.99 6.5 A4.51 4.51 0 0 1 11.01 6.5 Z" fill="#40c040"/><path d="M8.43 6.50 L11.01 6.50" stroke="#a8dca8" stroke-width="0.44"/><path d="M7.86 7.86 L9.69 9.69" stroke="#a8dca8" stroke-width="0.44"/><path d="M6.50 8.43 L6.50 11.01" stroke="#a8dca8" stroke-width="0.44"/><path d="M5.14 7.86 L3.31 9.69" stroke="#a8dca8" stroke-width="0.44"/><path d="M4.58 6.50 L1.99 6.50" stroke="#a8dca8" stroke-width="0.44"/><path d="M5.14 5.14 L3.31 3.31" stroke="#a8dca8" stroke-width="0.44"/><path d="M6.50 4.58 L6.50 1.99" stroke="#a8dca8" stroke-width="0.44"/><path d="M7.86 5.14 L9.69 3.31" stroke="#a8dca8" stroke-width="0.44"/><circle cx="6.5" cy="6.5" r="1.92" fill="#a8dca8"/><rect x="8" y="9" width="9" height="7" fill="#2a3a5a"/><rect x="10" y="11" width="5" height="3" fill="#d8b040"/></svg><svg style="position:absolute;left:809px;top:95px;" width="30" height="29" viewBox="0 0 30 29"><circle cx="10" cy="10" r="9.5" fill="#fff" stroke="#8a8a8a" stroke-width="0.95"/><circle cx="10" cy="10" r="7.79" fill="#1a9a1a"/><path d="M2.21 10 A7.79 7.79 0 0 1 17.79 10 Z" fill="#40c040"/><path d="M13.32 10.00 L17.79 10.00" stroke="#a8dca8" stroke-width="0.76"/><path d="M12.35 12.35 L15.51 15.51" stroke="#a8dca8" stroke-width="0.76"/><path d="M10.00 13.32 L10.00 17.79" stroke="#a8dca8" stroke-width="0.76"/><path d="M7.65 12.35 L4.49 15.51" stroke="#a8dca8" stroke-width="0.76"/><path d="M6.68 10.00 L2.21 10.00" stroke="#a8dca8" stroke-width="0.76"/><path d="M7.65 7.65 L4.49 4.49" stroke="#a8dca8" stroke-width="0.76"/><path d="M10.00 6.68 L10.00 2.21" stroke="#a8dca8" stroke-width="0.76"/><path d="M12.35 7.65 L15.51 4.49" stroke="#a8dca8" stroke-width="0.76"/><circle cx="10" cy="10" r="3.32" fill="#a8dca8"/><rect x="13.5" y="9" width="15" height="18" rx="1" fill="#e0a838" stroke="#b88020" stroke-width="0.8"/><rect x="15.5" y="11.5" width="11" height="14" fill="#e8eef4"/><rect x="18" y="7" width="6" height="4" rx="1" fill="#888"/><text x="16.6" y="21" font-size="5.5" font-weight="bold" fill="#333">OK</text></svg><svg style="position:absolute;left:733.4px;top:128.5px" width="39.7" height="16"><text x="1" y="12.8" font-size="12" fill="#2a2a2a" textLength="33.7" lengthAdjust="spacingAndGlyphs">Create</text></svg><svg style="position:absolute;left:730.9px;top:142.25px" width="45.3" height="16"><text x="1" y="12.8" font-size="12" fill="#2a2a2a" textLength="39.3" lengthAdjust="spacingAndGlyphs">Fiducial</text></svg><svg style="position:absolute;left:800.5px;top:128.5px" width="51.4" height="16"><text x="1" y="12.8" font-size="12" fill="#2a2a2a" textLength="45.4" lengthAdjust="spacingAndGlyphs">Show All</text></svg><svg style="position:absolute;left:800.9px;top:142.25px" width="51" height="16"><text x="1" y="12.8" font-size="12" fill="#2a2a2a" textLength="45" lengthAdjust="spacingAndGlyphs">Fiducials</text></svg><svg style="position:absolute;left:766.5px;top:160.9px" width="50.75" height="16"><text x="1" y="12.8" font-size="12" fill="#2a2a2a" textLength="44.75" lengthAdjust="spacingAndGlyphs">Fiducials</text></svg><svg style="position:absolute;left:858.4px;top:129.7px" width="73.5" height="16"><text x="1" y="12.8" font-size="12" fill="#2a2a2a" textLength="67.5" lengthAdjust="spacingAndGlyphs">Components</text></svg><svg style="position:absolute;left:940.1px;top:129.7px" width="73.5" height="16"><text x="1" y="12.8" font-size="12" fill="#2a2a2a" textLength="67.5" lengthAdjust="spacingAndGlyphs">Components</text></svg><svg style="position:absolute;left:890px;top:145px;" width="6" height="3" viewBox="0 0 6 3"><path d="M0 0 H6 L3 3 Z" fill="#555"/></svg><svg style="position:absolute;left:972px;top:145px;" width="6" height="3" viewBox="0 0 6 3"><path d="M0 0 H6 L3 3 Z" fill="#555"/></svg><div style="position:absolute;left:375px;top:187px;width:770px;height:1px;background:#d4d4d4;"></div><div style="position:absolute;left:375px;top:187px;width:1px;height:543px;background:#d4d4d4;"></div><div style="position:absolute;left:375px;top:729px;width:770px;height:1px;background:#d4d4d4;"></div><div style="position:absolute;left:1144px;top:187px;width:1px;height:543px;background:#d4d4d4;"></div><div style="position:absolute;left:1128px;top:191px;width:16px;height:534px;background:#f0f0f0;"></div><div style="position:absolute;left:376px;top:709px;width:752px;height:16px;background:#f0f0f0;"></div><svg style="position:absolute;left:1131px;top:196px;" width="10" height="8" viewBox="0 0 10 8"><path d="M1 6 L5 2 L9 6" stroke="#b0b0b0" stroke-width="1.3" fill="none"/></svg><svg style="position:absolute;left:1131px;top:696px;" width="10" height="8" viewBox="0 0 10 8"><path d="M1 2 L5 6 L9 2" stroke="#b0b0b0" stroke-width="1.3" fill="none"/></svg><svg style="position:absolute;left:381px;top:712px;" width="8" height="10" viewBox="0 0 8 10"><path d="M6 1 L2 5 L6 9" stroke="#b0b0b0" stroke-width="1.3" fill="none"/></svg><svg style="position:absolute;left:1115px;top:712px;" width="8" height="10" viewBox="0 0 8 10"><path d="M2 1 L6 5 L2 9" stroke="#b0b0b0" stroke-width="1.3" fill="none"/></svg><div style="position:absolute;left:1108px;top:686px;width:20px;height:20px;background:#ececec;border:1px solid #a8a8a8;box-sizing:border-box;"></div><svg style="position:absolute;left:1111px;top:689px;" width="14" height="14" viewBox="0 0 14 14"><circle cx="7" cy="7" r="5.8" fill="none" stroke="#7a7a7a" stroke-width="1"/><circle cx="7" cy="7" r="4.6" fill="#2aa02a"/><path d="M5 5 L9 9 M5 5 V7.5 M5 5 H7.5" stroke="#fff" stroke-width="1.3"/></svg><div style="position:absolute;left:1149px;top:188px;width:21px;height:61px;background:#d8d8d8;"></div><svg style="position:absolute;left:1151px;top:191px;" width="16" height="18" viewBox="0 0 16 18"><path d="M3 3 L10 1 L14 4 L13 12 L6 14 L2 11 Z" fill="#e84030"/><path d="M2 2 L9 0 L13 3 L12 10 L5 12 L1 9 Z" fill="#30b0e8"/><path d="M2 2 L9 0 L13 3 L6 5 Z" fill="#80d8f8"/></svg><div style="position:absolute;left:1136px;top:219px;width:48px;height:14px;transform:rotate(90deg);font-size:11.5px;line-height:14px;color:#333;text-align:center;">Layers</div><div style="position:absolute;left:349px;top:185px;width:22px;height:22px;background:#91bfe4;"></div><svg style="position:absolute;left:350px;top:188px;" width="20" height="18" viewBox="0 0 20 18"><path d="M1.5 1.5 L10.5 4.5 L8.3 6.5 L11.5 10 L9 12.2 L6 8.8 L3.8 11 Z" fill="#1a3ad0" stroke="#00108a" stroke-width="0.8"/><path d="M3 3 L8 5 L5 8 Z" fill="#5a80f0"/><path d="M12.3 5.8 V14.2 M8.1 10 H16.5" stroke="#000" stroke-width="1.2"/><path d="M12.3 4.6 L10.6 6.8 H14 Z M12.3 15.4 L10.6 13.2 H14 Z M6.9 10 L9.1 8.3 V11.7 Z M17.7 10 L15.5 8.3 V11.7 Z" fill="#000"/></svg><svg style="position:absolute;left:350px;top:210px;" width="16" height="16" viewBox="0 0 16 16"><rect x="1.5" y="1.5" width="12" height="13" fill="#fff" stroke="#000" stroke-width="1.3" stroke-dasharray="2 1.2"/></svg><svg style="position:absolute;left:350px;top:233px;" width="18" height="18" viewBox="0 0 18 18"><ellipse cx="9" cy="7" rx="7" ry="4.5" fill="none" stroke="#444" stroke-width="1.4" transform="rotate(-20 9 7)"/><path d="M5 11 Q4 14 6 16" stroke="#444" stroke-width="1.4" fill="none"/></svg><svg style="position:absolute;left:350px;top:255px;" width="18" height="18" viewBox="0 0 18 18"><path d="M2 2 L8 7 L15 2 L12 11 L6 15 Z" fill="none" stroke="#444" stroke-width="1.3"/><path d="M6 15 V17" stroke="#444" stroke-width="1.3"/></svg><svg style="position:absolute;left:350px;top:279px;" width="18" height="17" viewBox="0 0 18 17"><path d="M2 12 Q6 6 10 4 L15 3 Q17 5 15 7 L11 9 L8 14 Q5 16 2 12 Z" fill="#f0a890" stroke="#b86050" stroke-width="0.9"/><circle cx="14" cy="4" r="2" fill="#fff" stroke="#999" stroke-width="0.6"/></svg><div style="position:absolute;left:351px;top:301px;width:17px;height:1px;background:#c8c8c8;"></div><div style="position:absolute;left:349px;top:304px;width:22px;height:22px;background:#91bfe4;"></div><svg style="position:absolute;left:350px;top:306px;" width="20" height="18" viewBox="0 0 20 18"><rect x="2" y="1.5" width="14" height="1.3" fill="#000"/><rect x="2" y="4.5" width="14" height="2.2" fill="#000"/><rect x="2" y="8.3" width="14" height="3.2" fill="#000"/><rect x="2" y="13" width="14" height="4" fill="#000"/></svg><div style="position:absolute;left:349px;top:326px;width:22px;height:12px;background:#dcebf7;"></div><svg style="position:absolute;left:356px;top:328px;" width="6" height="8" viewBox="0 0 6 8"><path d="M1 0 L5 4 L1 8 Z" fill="#000"/></svg><svg style="position:absolute;left:350px;top:341px;" width="20" height="17" viewBox="0 0 20 17"><path d="M2 9 L8.5 2.5 L14.5 7.5 L8 14 Z" fill="#a8acb0" stroke="#555" stroke-width="0.8"/><path d="M3.5 8.8 L8.5 3.8 L10 5 L5 10 Z" fill="#e8eaec"/><path d="M2 12.5 Q5 14.5 9 13.5" stroke="#c8c8c8" stroke-width="1.2" fill="none"/><path d="M13 8 Q16.5 9.5 16.5 13 Q16.5 16 18.5 16 Q14 16.5 13.5 12 Z" fill="#30c840"/><path d="M8.5 2.5 L9.8 0.8" stroke="#555" stroke-width="1"/></svg><svg style="position:absolute;left:356px;top:362px;" width="6" height="8" viewBox="0 0 6 8"><path d="M1 0 L5 4 L1 8 Z" fill="#000"/></svg><div style="position:absolute;left:351px;top:375px;width:17px;height:1px;background:#c8c8c8;"></div><div style="position:absolute;left:349px;top:378px;width:22px;height:22px;background:#91bfe4;"></div><svg style="position:absolute;left:352px;top:381px;" width="17" height="16" viewBox="0 0 17 16"><rect x="0.5" y="1" width="2.4" height="2.4" fill="#40b050"/><rect x="3.8" y="1" width="2.4" height="2.4" fill="#40b050"/><rect x="7.1" y="1" width="2.4" height="2.4" fill="#40b050"/><rect x="10.4" y="1" width="2.4" height="2.4" fill="#40b050"/><rect x="13.7" y="1" width="2.4" height="2.4" fill="#40b050"/><rect x="0.5" y="5.5" width="2.4" height="2.4" fill="#80a8e0"/><rect x="3.8" y="5.5" width="2.4" height="2.4" fill="#80a8e0"/><rect x="7.1" y="5.5" width="2.4" height="2.4" fill="#80a8e0"/><rect x="10.4" y="5.5" width="2.4" height="2.4" fill="#80a8e0"/><rect x="13.7" y="5.5" width="2.4" height="2.4" fill="#80a8e0"/><rect x="0.5" y="9" width="2.4" height="2.4" fill="#80a8e0"/><rect x="3.8" y="9" width="2.4" height="2.4" fill="#80a8e0"/><rect x="7.1" y="9" width="2.4" height="2.4" fill="#80a8e0"/><rect x="10.4" y="9" width="2.4" height="2.4" fill="#80a8e0"/><rect x="13.7" y="9" width="2.4" height="2.4" fill="#80a8e0"/><rect x="0.5" y="12.5" width="2.4" height="2.4" fill="#80a8e0"/><rect x="3.8" y="12.5" width="2.4" height="2.4" fill="#80a8e0"/><rect x="7.1" y="12.5" width="2.4" height="2.4" fill="#80a8e0"/><rect x="10.4" y="12.5" width="2.4" height="2.4" fill="#80a8e0"/><rect x="13.7" y="12.5" width="2.4" height="2.4" fill="#80a8e0"/></svg><svg style="position:absolute;left:352px;top:405px;" width="17" height="16" viewBox="0 0 17 16"><rect x="0.5" y="1" width="2.4" height="2.4" fill="#80a8e0"/><rect x="3.8" y="1" width="2.4" height="2.4" fill="#80a8e0"/><rect x="7.1" y="1" width="2.4" height="2.4" fill="#80a8e0"/><rect x="10.4" y="1" width="2.4" height="2.4" fill="#80a8e0"/><rect x="13.7" y="1" width="2.4" height="2.4" fill="#80a8e0"/><rect x="0.5" y="4.5" width="2.4" height="2.4" fill="#80a8e0"/><rect x="3.8" y="4.5" width="2.4" height="2.4" fill="#80a8e0"/><rect x="7.1" y="4.5" width="2.4" height="2.4" fill="#80a8e0"/><rect x="10.4" y="4.5" width="2.4" height="2.4" fill="#80a8e0"/><rect x="13.7" y="4.5" width="2.4" height="2.4" fill="#80a8e0"/><rect x="0.5" y="8" width="2.4" height="2.4" fill="#80a8e0"/><rect x="3.8" y="8" width="2.4" height="2.4" fill="#80a8e0"/><rect x="7.1" y="8" width="2.4" height="2.4" fill="#80a8e0"/><rect x="10.4" y="8" width="2.4" height="2.4" fill="#80a8e0"/><rect x="13.7" y="8" width="2.4" height="2.4" fill="#80a8e0"/><rect x="0.5" y="11.5" width="2.4" height="2.4" fill="#40b050"/><rect x="3.8" y="11.5" width="2.4" height="2.4" fill="#40b050"/><rect x="7.1" y="11.5" width="2.4" height="2.4" fill="#40b050"/><rect x="10.4" y="11.5" width="2.4" height="2.4" fill="#40b050"/><rect x="13.7" y="11.5" width="2.4" height="2.4" fill="#40b050"/></svg><div style="position:absolute;left:351px;top:426px;width:17px;height:1px;background:#c8c8c8;"></div><svg style="position:absolute;left:350px;top:430px;" width="20" height="17" viewBox="0 0 20 17"><path d="M1 1 L9 3 L7 5 L11 9 L8 11 L5 7 L3 9 Z" fill="#1030c0"/><rect x="10" y="5" width="7" height="11" rx="2" fill="#c8d8e0" stroke="#6a8090" stroke-width="0.8"/><circle cx="13.5" cy="9" r="2" fill="#5a9ab0"/></svg><svg style="position:absolute;left:350px;top:453px;" width="20" height="17" viewBox="0 0 20 17"><path d="M1 1 L9 3 L7 5 L11 9 L8 11 L5 7 L3 9 Z" fill="#1030c0"/><rect x="8" y="8" width="11" height="8" fill="#2a3a50"/><rect x="10" y="10" width="7" height="4" fill="#d8b040"/></svg><svg style="position:absolute;left:350px;top:476px;" width="20" height="17" viewBox="0 0 20 17"><path d="M1 1 L9 3 L7 5 L11 9 L8 11 L5 7 L3 9 Z" fill="#1030c0"/><rect x="6" y="9" width="13" height="7" fill="#1a2a40"/><rect x="8" y="12" width="9" height="2.5" fill="#40c040"/></svg><div style="position:absolute;left:351px;top:497px;width:17px;height:1px;background:#c8c8c8;"></div><div style="position:absolute;left:349px;top:501px;width:22px;height:22px;background:#91bfe4;"></div><svg style="position:absolute;left:351px;top:503px;" width="18" height="18" viewBox="0 0 18 18"><rect x="1" y="1" width="7" height="7" fill="#20c020"/><rect x="10" y="1" width="7" height="7" fill="#20c020"/><rect x="1" y="10" width="7" height="7" fill="#20c020"/><rect x="10" y="10" width="7" height="7" fill="#20c020"/></svg><svg style="position:absolute;left:351px;top:526px;" width="18" height="17" viewBox="0 0 18 17"><rect x="1" y="1" width="7" height="7" fill="#20c020"/><rect x="10" y="1" width="7" height="7" fill="#a8a8a8"/><rect x="1" y="9.5" width="7" height="7" fill="#a8a8a8"/><rect x="10" y="9.5" width="7" height="7" fill="#a8a8a8"/></svg><div style="position:absolute;left:351px;top:548px;width:17px;height:1px;background:#c8c8c8;"></div><svg style="position:absolute;left:351px;top:555px;" width="17" height="15" viewBox="0 0 17 15"><rect x="1.5" y="1" width="13" height="13" fill="none" stroke="#b8e0b8" stroke-width="1.2"/><path d="M8 1 V14 M1.5 7.5 H14.5" stroke="#b8e0b8" stroke-width="1.2"/></svg><svg style="position:absolute;left:350px;top:577px;" width="18" height="17" viewBox="0 0 18 17"><path d="M5 1 V16 M13 1 V16 M1 5 H17 M1 12 H17" stroke="#8a8a8a" stroke-width="1.1"/></svg><svg style="position:absolute;left:357px;top:599px;" width="5" height="7" viewBox="0 0 5 7"><path d="M1 0 L4 3.5 L1 7 Z" fill="#888"/></svg><svg style="position:absolute;left:351px;top:611px;" width="16" height="16" viewBox="0 0 16 16"><rect x="2" y="1" width="11" height="13" fill="#e0e4ea" stroke="#c0c8d0" stroke-width="0.8"/><rect x="5" y="4" width="5" height="7" fill="#c8d0da"/></svg><svg style="position:absolute;left:350px;top:635px;" width="18" height="16" viewBox="0 0 18 16"><path d="M8 1 V15 M1 8 H15 M8 0.5 L5.5 3.5 H10.5 Z M15.5 8 L12.5 5.5 V10.5 Z M8 15.5 L5.5 12.5 H10.5 Z M0.5 8 L3.5 5.5 V10.5 Z" stroke="#90d090" stroke-width="1.5" fill="#90d090"/><path d="M10 10 L17 16 M17 10 L10 16" stroke="#a0a8a0" stroke-width="1.8"/></svg><svg style="position:absolute;left:350px;top:657px;" width="18" height="16" viewBox="0 0 18 16"><path d="M8 1 V15 M1 8 H15 M8 0.5 L5.5 3.5 H10.5 Z M15.5 8 L12.5 5.5 V10.5 Z M8 15.5 L5.5 12.5 H10.5 Z M0.5 8 L3.5 5.5 V10.5 Z" stroke="#90d090" stroke-width="1.5" fill="#90d090"/><path d="M11 10 L17 10 L14 15 Z" fill="#a0a8a0"/></svg><div style="position:absolute;left:348px;top:733px;width:822px;height:24px;background:#0072c6;"></div><div style="position:absolute;left:347px;top:757px;width:824px;height:3px;background:linear-gradient(#f4f4f4 0px,#f4f4f4 1px,#c4c4c4 1px,#c4c4c4 3px);"></div><svg style="position:absolute;left:350.8px;top:737.7px" width="92.4" height="16"><text x="1" y="12" font-size="12" fill="#fff" textLength="86.4" lengthAdjust="spacingAndGlyphs">(1.5160 , 3.3862)</text></svg><svg style="position:absolute;left:441px;top:737.7px" width="39" height="16"><text x="1" y="12" font-size="12" fill="#fff" textLength="33" lengthAdjust="spacingAndGlyphs">Inches</text></svg><svg style="position:absolute;left:482.8px;top:737.7px" width="49.4" height="16"><text x="1" y="12" font-size="12" fill="#fff" textLength="43.4" lengthAdjust="spacingAndGlyphs">Features</text></svg><svg style="position:absolute;left:534.5px;top:737.7px" width="24.9" height="16"><text x="1" y="12" font-size="12" fill="#fff" textLength="18.9" lengthAdjust="spacingAndGlyphs">189</text></svg><svg style="position:absolute;left:561.5px;top:737.7px" width="49.7" height="16"><text x="1" y="12" font-size="12" fill="#fff" textLength="43.7" lengthAdjust="spacingAndGlyphs">Selected</text></svg><svg style="position:absolute;left:612.7px;top:737.7px" width="12.8" height="16"><text x="1" y="12" font-size="12" fill="#fff" textLength="6.8" lengthAdjust="spacingAndGlyphs">0</text></svg><svg style="position:absolute;left:900px;top:733px" width="271" height="24" viewBox="900 733 271 24"><path d="M931.5 745 V741 A3.2 3.2 0 0 1 937.9 741 V744" fill="none" stroke="#d0d4d8" stroke-width="1.8"/><rect x="925.3" y="744.6" width="9" height="6.8" fill="#f0c020" stroke="#3a3a20" stroke-width="0.6"/><rect x="925.3" y="744.6" width="9" height="1.8" fill="#c8ccd0"/><path d="M926 751 L928.5 747 M928.8 751 L931.3 747 M931.6 751 L934 747.2" stroke="#202020" stroke-width="1.1"/><rect x="947.5" y="737.5" width="15" height="14.6" fill="none" stroke="#5a3a28" stroke-width="1.3" stroke-dasharray="2 1.6"/><path d="M954.13 746.47 L950.80 749.80" stroke="#7a5a30" stroke-width="3.2" stroke-linecap="round"/><path d="M954.13 746.47 L950.80 749.80" stroke="#e8c888" stroke-width="1.8" stroke-linecap="round"/><circle cx="958.2" cy="742.4" r="4.1" fill="#a8d4f0" stroke="#9a8460" stroke-width="1"/><circle cx="957.4000000000001" cy="741.4" r="1.8" fill="#e8f6ff"/><path d="M978.41 748.83 L975.80 751.80" stroke="#7a5a30" stroke-width="3.2" stroke-linecap="round"/><path d="M978.41 748.83 L975.80 751.80" stroke="#e8c888" stroke-width="1.8" stroke-linecap="round"/><circle cx="981.6" cy="745.2" r="4.1" fill="#a8d4f0" stroke="#9a8460" stroke-width="1"/><circle cx="980.8000000000001" cy="744.2" r="1.8" fill="#e8f6ff"/><text x="970.6" y="742.6" font-size="7.4" font-weight="bold" fill="#4a4a4a" textLength="14.5" lengthAdjust="spacingAndGlyphs">100</text><path d="M1001.41 748.83 L998.80 751.80" stroke="#7a5a30" stroke-width="3.2" stroke-linecap="round"/><path d="M1001.41 748.83 L998.80 751.80" stroke="#e8c888" stroke-width="1.8" stroke-linecap="round"/><circle cx="1004.6" cy="745.2" r="4.1" fill="#a8d4f0" stroke="#9a8460" stroke-width="1"/><circle cx="1003.8000000000001" cy="744.2" r="1.8" fill="#e8f6ff"/><text x="993.8" y="742.6" font-size="7.4" font-weight="bold" fill="#4a4a4a" textLength="14" lengthAdjust="spacingAndGlyphs">ALL</text><rect x="1019" y="739" width="5.5" height="1.8" fill="#000"/><rect x="1026.5" y="739" width="5.5" height="1.8" fill="#000"/><path d="M1023.92 748.45 L1026.80 751.60" stroke="#7a5a30" stroke-width="3.2" stroke-linecap="round"/><path d="M1023.92 748.45 L1026.80 751.60" stroke="#e8c888" stroke-width="1.8" stroke-linecap="round"/><circle cx="1020.4" cy="744.6" r="4.1" fill="#a8d4f0" stroke="#9a8460" stroke-width="1"/><circle cx="1019.6" cy="743.6" r="1.8" fill="#e8f6ff"/><rect x="1047.5" y="740.3" width="7.3" height="1.7" fill="#443c38"/><path d="M1046.72 748.45 L1049.60 751.60" stroke="#7a5a30" stroke-width="3.2" stroke-linecap="round"/><path d="M1046.72 748.45 L1049.60 751.60" stroke="#e8c888" stroke-width="1.8" stroke-linecap="round"/><circle cx="1043.2" cy="744.6" r="4.1" fill="#a8d4f0" stroke="#9a8460" stroke-width="1"/><circle cx="1042.4" cy="743.6" r="1.8" fill="#e8f6ff"/><path d="M1139.3 737.4 V745.1 M1135.4 741.25 H1143.2" stroke="#4a4040" stroke-width="2"/><path d="M1134.79 748.84 L1137.40 751.90" stroke="#7a5a30" stroke-width="3.2" stroke-linecap="round"/><path d="M1134.79 748.84 L1137.40 751.90" stroke="#e8c888" stroke-width="1.8" stroke-linecap="round"/><circle cx="1131.6" cy="745.1" r="4.1" fill="#a8d4f0" stroke="#9a8460" stroke-width="1"/><circle cx="1130.8" cy="744.1" r="1.8" fill="#e8f6ff"/><path d="M1157.54 749.23 L1160.60 752.20" stroke="#7a5a30" stroke-width="3.2" stroke-linecap="round"/><path d="M1157.54 749.23 L1160.60 752.20" stroke="#e8c888" stroke-width="1.8" stroke-linecap="round"/><circle cx="1153.8" cy="745.6" r="4.1" fill="#a8d4f0" stroke="#9a8460" stroke-width="1"/><circle cx="1153.0" cy="744.6" r="1.8" fill="#e8f6ff"/><path d="M1155.5 737.4 V743.6 M1152.4 740.5 H1158.6 M1163.3 737.4 V743.6 M1160.2 740.5 H1166.4" stroke="#000" stroke-width="2"/></svg><div style="position:absolute;left:1063px;top:735px;width:56px;height:20px;background:#fff;border:1px solid #b8b8b8;box-sizing:border-box;"></div><svg style="position:absolute;left:1066.4px;top:738.3px" width="34.8" height="16"><text x="1" y="12.8" font-size="12" fill="#2a2a2a" textLength="28.8" lengthAdjust="spacingAndGlyphs">117%</text></svg><div style="position:absolute;left:1103px;top:736px;width:15px;height:17px;background:#ececec;border:1px solid #a8a8a8;box-sizing:border-box;"></div><svg style="position:absolute;left:1105px;top:738px;" width="11" height="13" viewBox="0 0 11 13"><path d="M1.5 5 L5.5 1.5 L9.5 5 M1.5 8 L5.5 11.5 L9.5 8" stroke="#555" stroke-width="1.1" fill="none"/></svg><svg style="position:absolute;left:430px;top:295px" width="640" height="310" viewBox="430 295 640 310"><rect x="441.5" y="305.8" width="620" height="287.7" fill="#90ee90" stroke="#3a4e3a" stroke-width="1"/><text x="0" y="0" font-size="7.4" fill="#1c2c28" text-anchor="middle" opacity="1" transform="translate(459.20 313.40) scale(0.97 1.2)">MH4</text><rect x="451.40" y="315.30" width="15.80" height="16.20" fill="none" stroke="#263a26" stroke-width="1.0"/><circle cx="459.30" cy="323.40" r="7.40" fill="#b8860b"/><text x="484.00" y="304.60" font-size="5.6" fill="#808080" text-anchor="middle" opacity="0.9">TP5</text><rect x="478.80" y="309.10" width="10.00" height="18.10" fill="#ffb6c1" stroke="#de9058" stroke-width="0.5"/><rect x="478.00" y="306.70" width="11.60" height="22.90" fill="none" stroke="#263a26" stroke-width="1.0"/><text x="497.30" y="315.50" font-size="4.8" fill="#2a4050" text-anchor="middle" opacity="0.9">C28</text><rect x="493.30" y="317.40" width="8.10" height="13.60" fill="none" stroke="#263a26" stroke-width="1.0"/><rect x="495.08" y="319.30" width="4.54" height="4.08" fill="#ffb6c1" stroke="#de9058" stroke-width="0.6"/><rect x="495.08" y="325.02" width="4.54" height="4.08" fill="#ffb6c1" stroke="#de9058" stroke-width="0.6"/><text x="0" y="0" font-size="7.8" fill="#1c2c28" text-anchor="middle" opacity="1" transform="translate(509.50 320.30) scale(0.97 1.2)">R25</text><rect x="502.40" y="322.40" width="14.10" height="8.30" fill="none" stroke="#263a26" stroke-width="1.0"/><rect x="504.09" y="324.06" width="4.51" height="4.98" fill="#ffb6c1" stroke="#de9058" stroke-width="0.6"/><rect x="510.30" y="324.06" width="4.51" height="4.98" fill="#ffb6c1" stroke="#de9058" stroke-width="0.6"/><rect x="488.10" y="331.30" width="9.60" height="7.00" fill="none" stroke="#263a26" stroke-width="1.0"/><rect x="487.80" y="332.30" width="3.70" height="5.20" fill="#ffb6c1" stroke="#de9058" stroke-width="0.6"/><rect x="493.50" y="332.30" width="3.70" height="5.20" fill="#ffb6c1" stroke="#de9058" stroke-width="0.6"/><rect x="488.10" y="340.30" width="9.60" height="7.20" fill="none" stroke="#263a26" stroke-width="1.0"/><rect x="487.80" y="341.30" width="3.70" height="5.20" fill="#ffb6c1" stroke="#de9058" stroke-width="0.6"/><rect x="493.50" y="341.30" width="3.70" height="5.20" fill="#ffb6c1" stroke="#de9058" stroke-width="0.6"/><rect x="501.40" y="332.50" width="12.80" height="12.90" fill="none" stroke="#263a26" stroke-width="1.0"/><rect x="503.00" y="334.00" width="2.20" height="10.00" fill="#ffb6c1" stroke="#de9058" stroke-width="0.6"/><rect x="506.80" y="334.00" width="2.20" height="10.00" fill="#ffb6c1" stroke="#de9058" stroke-width="0.6"/><rect x="510.60" y="334.00" width="2.20" height="10.00" fill="#ffb6c1" stroke="#de9058" stroke-width="0.6"/><text x="0" y="0" font-size="7.6" fill="#3a4a3a" text-anchor="middle" opacity="0.8" transform="translate(508.00 342.50) scale(0.97 1.2)">U12</text><text x="0" y="0" font-size="7.8" fill="#1c2c28" text-anchor="end" opacity="1" transform="translate(471.00 342.90) scale(0.97 1.2)">C26</text><rect x="471.30" y="336.50" width="14.10" height="8.10" fill="none" stroke="#263a26" stroke-width="1.0"/><rect x="472.99" y="338.12" width="4.51" height="4.86" fill="#ffb6c1" stroke="#de9058" stroke-width="0.6"/><rect x="479.20" y="338.12" width="4.51" height="4.86" fill="#ffb6c1" stroke="#de9058" stroke-width="0.6"/><text x="452.70" y="344.50" font-size="4.8" fill="#2a4050" text-anchor="middle" opacity="0.9">FM1</text><rect x="449.5" y="345.8" width="6.5" height="7" fill="none" stroke="#5a8a5a" stroke-width="0.6"/><path d="M452.75 345.8 V352.8 M449.5 349.3 H456.0" stroke="#c8801a" stroke-width="0.9"/><rect x="493.30" y="347.50" width="8.10" height="13.70" fill="none" stroke="#263a26" stroke-width="1.0"/><rect x="495.08" y="349.42" width="4.54" height="4.11" fill="#ffb6c1" stroke="#de9058" stroke-width="0.6"/><rect x="495.08" y="355.17" width="4.54" height="4.11" fill="#ffb6c1" stroke="#de9058" stroke-width="0.6"/><text x="497.30" y="366.00" font-size="4.8" fill="#2a4050" text-anchor="middle" opacity="0.9">C27</text><rect x="502.40" y="348.10" width="14.10" height="8.50" fill="none" stroke="#263a26" stroke-width="1.0"/><rect x="504.09" y="349.80" width="4.51" height="5.10" fill="#ffb6c1" stroke="#de9058" stroke-width="0.6"/><rect x="510.30" y="349.80" width="4.51" height="5.10" fill="#ffb6c1" stroke="#de9058" stroke-width="0.6"/><text x="0" y="0" font-size="7.8" fill="#1c2c28" text-anchor="middle" opacity="1" transform="translate(509.50 363.20) scale(0.97 1.2)">R24</text><text x="0" y="0" font-size="7.8" fill="#1c2c28" text-anchor="middle" opacity="1" transform="translate(529.80 319.10) scale(0.97 1.2)">Q2</text><text x="0" y="0" font-size="7.8" fill="#1c2c28" text-anchor="middle" opacity="1" transform="translate(549.70 319.10) scale(0.97 1.2)">Q1</text><rect x="522.10" y="321.40" width="15.30" height="18.00" fill="none" stroke="#263a26" stroke-width="1.0"/><rect x="527.55" y="323.50" width="4.40" height="6.00" fill="#ffb6c1" stroke="#de9058" stroke-width="0.6"/><rect x="524.10" y="332.50" width="4.20" height="5.00" fill="#ffb6c1" stroke="#de9058" stroke-width="0.6"/><rect x="531.20" y="332.50" width="4.20" height="5.00" fill="#ffb6c1" stroke="#de9058" stroke-width="0.6"/><rect x="541.80" y="321.40" width="15.90" height="18.00" fill="none" stroke="#263a26" stroke-width="1.0"/><rect x="547.55" y="323.50" width="4.40" height="6.00" fill="#ffb6c1" stroke="#de9058" stroke-width="0.6"/><rect x="543.80" y="332.50" width="4.20" height="5.00" fill="#ffb6c1" stroke="#de9058" stroke-width="0.6"/><rect x="551.50" y="332.50" width="4.20" height="5.00" fill="#ffb6c1" stroke="#de9058" stroke-width="0.6"/><text x="0" y="0" font-size="7.8" fill="#1c2c28" text-anchor="end" opacity="1" transform="translate(540.30 345.40) scale(0.97 1.2)">R26</text><rect x="541.40" y="339.70" width="14.00" height="7.80" fill="none" stroke="#263a26" stroke-width="1.0"/><rect x="543.08" y="341.26" width="4.48" height="4.68" fill="#ffb6c1" stroke="#de9058" stroke-width="0.6"/><rect x="549.24" y="341.26" width="4.48" height="4.68" fill="#ffb6c1" stroke="#de9058" stroke-width="0.6"/><text x="0" y="0" font-size="4.6" fill="#2c3c38" text-anchor="middle" opacity="0.75" transform="translate(466.50 357.40) rotate(-90)">C36</text><rect x="468.40" y="353.30" width="13.10" height="8.10" fill="none" stroke="#263a26" stroke-width="1.0"/><rect x="469.97" y="354.92" width="4.19" height="4.86" fill="#ffb6c1" stroke="#de9058" stroke-width="0.6"/><rect x="475.74" y="354.92" width="4.19" height="4.86" fill="#ffb6c1" stroke="#de9058" stroke-width="0.6"/><text x="452.90" y="361.00" font-size="4.8" fill="#2a4050" text-anchor="middle" opacity="0.9">TP31</text><rect x="448.00" y="365.60" width="9.80" height="17.80" fill="#ffb6c1" stroke="#de9058" stroke-width="0.5"/><rect x="447.20" y="363.20" width="11.40" height="22.60" fill="none" stroke="#263a26" stroke-width="1.0"/><rect x="462.40" y="362.40" width="17.00" height="22.80" fill="none" stroke="#263a26" stroke-width="1.0"/><rect x="465.63" y="366.50" width="2.46" height="5.02" fill="#ffb6c1" stroke="#de9058" stroke-width="0.6"/><rect x="469.14" y="366.50" width="2.46" height="5.02" fill="#ffb6c1" stroke="#de9058" stroke-width="0.6"/><rect x="472.66" y="366.50" width="2.46" height="5.02" fill="#ffb6c1" stroke="#de9058" stroke-width="0.6"/><rect x="465.63" y="376.08" width="2.46" height="5.02" fill="#ffb6c1" stroke="#de9058" stroke-width="0.6"/><rect x="469.14" y="376.08" width="2.46" height="5.02" fill="#ffb6c1" stroke="#de9058" stroke-width="0.6"/><rect x="472.66" y="376.08" width="2.46" height="5.02" fill="#ffb6c1" stroke="#de9058" stroke-width="0.6"/><text x="0" y="0" font-size="8" fill="#1c2c28" text-anchor="start" opacity="1" transform="translate(480.00 376.50) scale(0.97 1.2)">U13</text><rect x="465.50" y="384.60" width="14.20" height="7.90" fill="none" stroke="#263a26" stroke-width="1.0"/><rect x="467.20" y="386.18" width="4.54" height="4.74" fill="#ffb6c1" stroke="#de9058" stroke-width="0.6"/><rect x="473.45" y="386.18" width="4.54" height="4.74" fill="#ffb6c1" stroke="#de9058" stroke-width="0.6"/><text x="0" y="0" font-size="7.4" fill="#1c2c28" text-anchor="start" opacity="1" transform="translate(481.00 390.70) scale(0.97 1.2)">C34</text><text x="455.50" y="407.50" font-size="4.8" fill="#2a4050" text-anchor="middle" opacity="0.9">C51</text><rect x="451.40" y="409.60" width="8.10" height="13.90" fill="none" stroke="#263a26" stroke-width="1.0"/><rect x="453.18" y="411.55" width="4.54" height="4.17" fill="#ffb6c1" stroke="#de9058" stroke-width="0.6"/><rect x="453.18" y="417.38" width="4.54" height="4.17" fill="#ffb6c1" stroke="#de9058" stroke-width="0.6"/><rect x="461.20" y="400.30" width="30.40" height="34.20" fill="none" stroke="#263a26" stroke-width="1.3"/><rect x="463.00" y="401.90" width="1.46" height="7.00" fill="#ffb6c1" stroke="#e0904e" stroke-width="0.5"/><rect x="465.28" y="401.90" width="1.46" height="7.00" fill="#ffb6c1" stroke="#e0904e" stroke-width="0.5"/><rect x="467.57" y="401.90" width="1.46" height="7.00" fill="#ffb6c1" stroke="#e0904e" stroke-width="0.5"/><rect x="469.85" y="401.90" width="1.46" height="7.00" fill="#ffb6c1" stroke="#e0904e" stroke-width="0.5"/><rect x="472.13" y="401.90" width="1.46" height="7.00" fill="#ffb6c1" stroke="#e0904e" stroke-width="0.5"/><rect x="474.42" y="401.90" width="1.46" height="7.00" fill="#ffb6c1" stroke="#e0904e" stroke-width="0.5"/><rect x="476.70" y="401.90" width="1.46" height="7.00" fill="#ffb6c1" stroke="#e0904e" stroke-width="0.5"/><rect x="478.98" y="401.90" width="1.46" height="7.00" fill="#ffb6c1" stroke="#e0904e" stroke-width="0.5"/><rect x="481.27" y="401.90" width="1.46" height="7.00" fill="#ffb6c1" stroke="#e0904e" stroke-width="0.5"/><rect x="483.55" y="401.90" width="1.46" height="7.00" fill="#ffb6c1" stroke="#e0904e" stroke-width="0.5"/><rect x="485.83" y="401.90" width="1.46" height="7.00" fill="#ffb6c1" stroke="#e0904e" stroke-width="0.5"/><rect x="488.12" y="401.90" width="1.46" height="7.00" fill="#ffb6c1" stroke="#e0904e" stroke-width="0.5"/><rect x="463.00" y="425.90" width="1.46" height="7.00" fill="#ffb6c1" stroke="#e0904e" stroke-width="0.5"/><rect x="465.28" y="425.90" width="1.46" height="7.00" fill="#ffb6c1" stroke="#e0904e" stroke-width="0.5"/><rect x="467.57" y="425.90" width="1.46" height="7.00" fill="#ffb6c1" stroke="#e0904e" stroke-width="0.5"/><rect x="469.85" y="425.90" width="1.46" height="7.00" fill="#ffb6c1" stroke="#e0904e" stroke-width="0.5"/><rect x="472.13" y="425.90" width="1.46" height="7.00" fill="#ffb6c1" stroke="#e0904e" stroke-width="0.5"/><rect x="474.42" y="425.90" width="1.46" height="7.00" fill="#ffb6c1" stroke="#e0904e" stroke-width="0.5"/><rect x="476.70" y="425.90" width="1.46" height="7.00" fill="#ffb6c1" stroke="#e0904e" stroke-width="0.5"/><rect x="478.98" y="425.90" width="1.46" height="7.00" fill="#ffb6c1" stroke="#e0904e" stroke-width="0.5"/><rect x="481.27" y="425.90" width="1.46" height="7.00" fill="#ffb6c1" stroke="#e0904e" stroke-width="0.5"/><rect x="483.55" y="425.90" width="1.46" height="7.00" fill="#ffb6c1" stroke="#e0904e" stroke-width="0.5"/><rect x="485.83" y="425.90" width="1.46" height="7.00" fill="#ffb6c1" stroke="#e0904e" stroke-width="0.5"/><rect x="488.12" y="425.90" width="1.46" height="7.00" fill="#ffb6c1" stroke="#e0904e" stroke-width="0.5"/><text x="0" y="0" font-size="8.6" fill="#2a3a48" text-anchor="middle" opacity="1" transform="translate(476.40 420.00) scale(0.97 1.2)">U21</text><text x="496.10" y="408.50" font-size="4.8" fill="#2a4050" text-anchor="middle" opacity="0.9">C52</text><rect x="492.20" y="410.40" width="7.80" height="13.10" fill="none" stroke="#263a26" stroke-width="1.0"/><rect x="493.92" y="412.23" width="4.37" height="3.93" fill="#ffb6c1" stroke="#de9058" stroke-width="0.6"/><rect x="493.92" y="417.74" width="4.37" height="3.93" fill="#ffb6c1" stroke="#de9058" stroke-width="0.6"/><text x="0" y="0" font-size="8.2" fill="#2a3a48" text-anchor="middle" opacity="1" transform="translate(518.80 397.40) scale(0.97 1.2)">U6</text><rect x="500.30" y="399.50" width="37.10" height="34.10" fill="none" stroke="#263a26" stroke-width="1.0"/><rect x="502.10" y="401.10" width="1.82" height="8.00" fill="#ffb6c1" stroke="#e0904e" stroke-width="0.5"/><rect x="504.94" y="401.10" width="1.82" height="8.00" fill="#ffb6c1" stroke="#e0904e" stroke-width="0.5"/><rect x="507.78" y="401.10" width="1.82" height="8.00" fill="#ffb6c1" stroke="#e0904e" stroke-width="0.5"/><rect x="510.62" y="401.10" width="1.82" height="8.00" fill="#ffb6c1" stroke="#e0904e" stroke-width="0.5"/><rect x="513.47" y="401.10" width="1.82" height="8.00" fill="#ffb6c1" stroke="#e0904e" stroke-width="0.5"/><rect x="516.31" y="401.10" width="1.82" height="8.00" fill="#ffb6c1" stroke="#e0904e" stroke-width="0.5"/><rect x="519.15" y="401.10" width="1.82" height="8.00" fill="#ffb6c1" stroke="#e0904e" stroke-width="0.5"/><rect x="521.99" y="401.10" width="1.82" height="8.00" fill="#ffb6c1" stroke="#e0904e" stroke-width="0.5"/><rect x="524.83" y="401.10" width="1.82" height="8.00" fill="#ffb6c1" stroke="#e0904e" stroke-width="0.5"/><rect x="527.67" y="401.10" width="1.82" height="8.00" fill="#ffb6c1" stroke="#e0904e" stroke-width="0.5"/><rect x="530.52" y="401.10" width="1.82" height="8.00" fill="#ffb6c1" stroke="#e0904e" stroke-width="0.5"/><rect x="533.16" y="401.10" width="2.30" height="8.00" rx="0.9" fill="#ff0000"/><rect x="502.10" y="424.00" width="1.82" height="8.00" fill="#ffb6c1" stroke="#e0904e" stroke-width="0.5"/><rect x="504.94" y="424.00" width="1.82" height="8.00" fill="#ffb6c1" stroke="#e0904e" stroke-width="0.5"/><rect x="507.78" y="424.00" width="1.82" height="8.00" fill="#ffb6c1" stroke="#e0904e" stroke-width="0.5"/><rect x="510.62" y="424.00" width="1.82" height="8.00" fill="#ffb6c1" stroke="#e0904e" stroke-width="0.5"/><rect x="513.47" y="424.00" width="1.82" height="8.00" fill="#ffb6c1" stroke="#e0904e" stroke-width="0.5"/><rect x="516.31" y="424.00" width="1.82" height="8.00" fill="#ffb6c1" stroke="#e0904e" stroke-width="0.5"/><rect x="519.15" y="424.00" width="1.82" height="8.00" fill="#ffb6c1" stroke="#e0904e" stroke-width="0.5"/><rect x="521.99" y="424.00" width="1.82" height="8.00" fill="#ffb6c1" stroke="#e0904e" stroke-width="0.5"/><rect x="524.83" y="424.00" width="1.82" height="8.00" fill="#ffb6c1" stroke="#e0904e" stroke-width="0.5"/><rect x="527.67" y="424.00" width="1.82" height="8.00" fill="#ffb6c1" stroke="#e0904e" stroke-width="0.5"/><rect x="530.52" y="424.00" width="1.82" height="8.00" fill="#ffb6c1" stroke="#e0904e" stroke-width="0.5"/><rect x="533.36" y="424.00" width="1.82" height="8.00" fill="#ffb6c1" stroke="#e0904e" stroke-width="0.5"/><text x="542.50" y="396.50" font-size="4.8" fill="#2a4050" text-anchor="middle" opacity="0.9">C16</text><rect x="538.30" y="398.30" width="8.40" height="13.20" fill="none" stroke="#263a26" stroke-width="1.0"/><rect x="540.15" y="400.15" width="4.70" height="3.96" fill="#ffb6c1" stroke="#de9058" stroke-width="0.6"/><rect x="540.15" y="405.69" width="4.70" height="3.96" fill="#ffb6c1" stroke="#de9058" stroke-width="0.6"/><text x="542.50" y="419.00" font-size="4.8" fill="#2a4050" text-anchor="middle" opacity="0.9">C30</text><rect x="538.30" y="420.60" width="8.40" height="13.70" fill="none" stroke="#263a26" stroke-width="1.0"/><rect x="540.15" y="422.52" width="4.70" height="4.11" fill="#ffb6c1" stroke="#de9058" stroke-width="0.6"/><rect x="540.15" y="428.27" width="4.70" height="4.11" fill="#ffb6c1" stroke="#de9058" stroke-width="0.6"/><text x="0" y="0" font-size="8.2" fill="#2a3a48" text-anchor="middle" opacity="1" transform="translate(566.80 397.30) scale(0.97 1.2)">U8</text><rect x="548.50" y="399.40" width="36.20" height="33.90" fill="none" stroke="#263a26" stroke-width="1.0"/><rect x="550.30" y="401.00" width="1.77" height="8.00" fill="#ffb6c1" stroke="#e0904e" stroke-width="0.5"/><rect x="553.07" y="401.00" width="1.77" height="8.00" fill="#ffb6c1" stroke="#e0904e" stroke-width="0.5"/><rect x="555.83" y="401.00" width="1.77" height="8.00" fill="#ffb6c1" stroke="#e0904e" stroke-width="0.5"/><rect x="558.60" y="401.00" width="1.77" height="8.00" fill="#ffb6c1" stroke="#e0904e" stroke-width="0.5"/><rect x="561.37" y="401.00" width="1.77" height="8.00" fill="#ffb6c1" stroke="#e0904e" stroke-width="0.5"/><rect x="564.13" y="401.00" width="1.77" height="8.00" fill="#ffb6c1" stroke="#e0904e" stroke-width="0.5"/><rect x="566.90" y="401.00" width="1.77" height="8.00" fill="#ffb6c1" stroke="#e0904e" stroke-width="0.5"/><rect x="569.67" y="401.00" width="1.77" height="8.00" fill="#ffb6c1" stroke="#e0904e" stroke-width="0.5"/><rect x="572.43" y="401.00" width="1.77" height="8.00" fill="#ffb6c1" stroke="#e0904e" stroke-width="0.5"/><rect x="575.20" y="401.00" width="1.77" height="8.00" fill="#ffb6c1" stroke="#e0904e" stroke-width="0.5"/><rect x="577.97" y="401.00" width="1.77" height="8.00" fill="#ffb6c1" stroke="#e0904e" stroke-width="0.5"/><rect x="580.53" y="401.00" width="2.26" height="8.00" rx="0.9" fill="#ff0000"/><rect x="550.30" y="423.70" width="1.77" height="8.00" fill="#ffb6c1" stroke="#e0904e" stroke-width="0.5"/><rect x="553.07" y="423.70" width="1.77" height="8.00" fill="#ffb6c1" stroke="#e0904e" stroke-width="0.5"/><rect x="555.83" y="423.70" width="1.77" height="8.00" fill="#ffb6c1" stroke="#e0904e" stroke-width="0.5"/><rect x="558.60" y="423.70" width="1.77" height="8.00" fill="#ffb6c1" stroke="#e0904e" stroke-width="0.5"/><rect x="561.37" y="423.70" width="1.77" height="8.00" fill="#ffb6c1" stroke="#e0904e" stroke-width="0.5"/><rect x="564.13" y="423.70" width="1.77" height="8.00" fill="#ffb6c1" stroke="#e0904e" stroke-width="0.5"/><rect x="566.90" y="423.70" width="1.77" height="8.00" fill="#ffb6c1" stroke="#e0904e" stroke-width="0.5"/><rect x="569.67" y="423.70" width="1.77" height="8.00" fill="#ffb6c1" stroke="#e0904e" stroke-width="0.5"/><rect x="572.43" y="423.70" width="1.77" height="8.00" fill="#ffb6c1" stroke="#e0904e" stroke-width="0.5"/><rect x="575.20" y="423.70" width="1.77" height="8.00" fill="#ffb6c1" stroke="#e0904e" stroke-width="0.5"/><rect x="577.97" y="423.70" width="1.77" height="8.00" fill="#ffb6c1" stroke="#e0904e" stroke-width="0.5"/><rect x="580.73" y="423.70" width="1.77" height="8.00" fill="#ffb6c1" stroke="#e0904e" stroke-width="0.5"/><text x="590.60" y="396.50" font-size="4.8" fill="#2a4050" text-anchor="middle" opacity="0.9">C17</text><rect x="586.40" y="398.30" width="8.50" height="13.70" fill="none" stroke="#263a26" stroke-width="1.0"/><rect x="588.27" y="400.22" width="4.76" height="4.11" fill="#ffb6c1" stroke="#de9058" stroke-width="0.6"/><rect x="588.27" y="405.97" width="4.76" height="4.11" fill="#ffb6c1" stroke="#de9058" stroke-width="0.6"/><text x="590.60" y="419.50" font-size="4.8" fill="#2a4050" text-anchor="middle" opacity="0.9">C31</text><rect x="586.40" y="421.40" width="8.50" height="14.20" fill="none" stroke="#263a26" stroke-width="1.0"/><rect x="588.27" y="423.39" width="4.76" height="4.26" fill="#ffb6c1" stroke="#de9058" stroke-width="0.6"/><rect x="588.27" y="429.35" width="4.76" height="4.26" fill="#ffb6c1" stroke="#de9058" stroke-width="0.6"/><text x="0" y="0" font-size="8.2" fill="#2a3a48" text-anchor="middle" opacity="1" transform="translate(637.20 374.50) scale(0.97 1.2)">U9</text><rect x="618.30" y="377.40" width="37.40" height="33.80" fill="none" stroke="#263a26" stroke-width="1.0"/><rect x="620.10" y="379.00" width="1.83" height="8.00" fill="#ffb6c1" stroke="#e0904e" stroke-width="0.5"/><rect x="622.97" y="379.00" width="1.83" height="8.00" fill="#ffb6c1" stroke="#e0904e" stroke-width="0.5"/><rect x="625.83" y="379.00" width="1.83" height="8.00" fill="#ffb6c1" stroke="#e0904e" stroke-width="0.5"/><rect x="628.70" y="379.00" width="1.83" height="8.00" fill="#ffb6c1" stroke="#e0904e" stroke-width="0.5"/><rect x="631.57" y="379.00" width="1.83" height="8.00" fill="#ffb6c1" stroke="#e0904e" stroke-width="0.5"/><rect x="634.43" y="379.00" width="1.83" height="8.00" fill="#ffb6c1" stroke="#e0904e" stroke-width="0.5"/><rect x="637.30" y="379.00" width="1.83" height="8.00" fill="#ffb6c1" stroke="#e0904e" stroke-width="0.5"/><rect x="640.17" y="379.00" width="1.83" height="8.00" fill="#ffb6c1" stroke="#e0904e" stroke-width="0.5"/><rect x="643.03" y="379.00" width="1.83" height="8.00" fill="#ffb6c1" stroke="#e0904e" stroke-width="0.5"/><rect x="645.90" y="379.00" width="1.83" height="8.00" fill="#ffb6c1" stroke="#e0904e" stroke-width="0.5"/><rect x="648.77" y="379.00" width="1.83" height="8.00" fill="#ffb6c1" stroke="#e0904e" stroke-width="0.5"/><rect x="651.43" y="379.00" width="2.32" height="8.00" rx="0.9" fill="#ff0000"/><rect x="620.10" y="401.60" width="1.83" height="8.00" fill="#ffb6c1" stroke="#e0904e" stroke-width="0.5"/><rect x="622.97" y="401.60" width="1.83" height="8.00" fill="#ffb6c1" stroke="#e0904e" stroke-width="0.5"/><rect x="625.83" y="401.60" width="1.83" height="8.00" fill="#ffb6c1" stroke="#e0904e" stroke-width="0.5"/><rect x="628.70" y="401.60" width="1.83" height="8.00" fill="#ffb6c1" stroke="#e0904e" stroke-width="0.5"/><rect x="631.57" y="401.60" width="1.83" height="8.00" fill="#ffb6c1" stroke="#e0904e" stroke-width="0.5"/><rect x="634.43" y="401.60" width="1.83" height="8.00" fill="#ffb6c1" stroke="#e0904e" stroke-width="0.5"/><rect x="637.30" y="401.60" width="1.83" height="8.00" fill="#ffb6c1" stroke="#e0904e" stroke-width="0.5"/><rect x="640.17" y="401.60" width="1.83" height="8.00" fill="#ffb6c1" stroke="#e0904e" stroke-width="0.5"/><rect x="643.03" y="401.60" width="1.83" height="8.00" fill="#ffb6c1" stroke="#e0904e" stroke-width="0.5"/><rect x="645.90" y="401.60" width="1.83" height="8.00" fill="#ffb6c1" stroke="#e0904e" stroke-width="0.5"/><rect x="648.77" y="401.60" width="1.83" height="8.00" fill="#ffb6c1" stroke="#e0904e" stroke-width="0.5"/><rect x="651.63" y="401.60" width="1.83" height="8.00" fill="#ffb6c1" stroke="#e0904e" stroke-width="0.5"/><text x="638.50" y="397.30" font-size="4.8" fill="#2a4050" text-anchor="middle" opacity="0.9">C18</text><rect x="634.30" y="399.20" width="8.30" height="13.20" fill="none" stroke="#263a26" stroke-width="1.0"/><rect x="635.50" y="400.50" width="6.00" height="10.50" fill="#ffb6c1" stroke="#de9058" stroke-width="0.6"/><text x="638.50" y="419.50" font-size="4.8" fill="#2a4050" text-anchor="middle" opacity="0.9">C32</text><rect x="634.30" y="421.40" width="8.30" height="14.20" fill="none" stroke="#263a26" stroke-width="1.0"/><rect x="636.13" y="423.39" width="4.65" height="4.26" fill="#ffb6c1" stroke="#de9058" stroke-width="0.6"/><rect x="636.13" y="429.35" width="4.65" height="4.26" fill="#ffb6c1" stroke="#de9058" stroke-width="0.6"/><text x="0" y="0" font-size="8.2" fill="#1c2c28" text-anchor="start" opacity="1" transform="translate(655.20 397.80) scale(0.97 1.2)">U11</text><rect x="674.30" y="377.20" width="37.10" height="34.20" fill="none" stroke="#263a26" stroke-width="1.0"/><rect x="676.10" y="378.80" width="1.82" height="8.00" fill="#ffb6c1" stroke="#e0904e" stroke-width="0.5"/><rect x="678.94" y="378.80" width="1.82" height="8.00" fill="#ffb6c1" stroke="#e0904e" stroke-width="0.5"/><rect x="681.78" y="378.80" width="1.82" height="8.00" fill="#ffb6c1" stroke="#e0904e" stroke-width="0.5"/><rect x="684.62" y="378.80" width="1.82" height="8.00" fill="#ffb6c1" stroke="#e0904e" stroke-width="0.5"/><rect x="687.47" y="378.80" width="1.82" height="8.00" fill="#ffb6c1" stroke="#e0904e" stroke-width="0.5"/><rect x="690.31" y="378.80" width="1.82" height="8.00" fill="#ffb6c1" stroke="#e0904e" stroke-width="0.5"/><rect x="693.15" y="378.80" width="1.82" height="8.00" fill="#ffb6c1" stroke="#e0904e" stroke-width="0.5"/><rect x="695.99" y="378.80" width="1.82" height="8.00" fill="#ffb6c1" stroke="#e0904e" stroke-width="0.5"/><rect x="698.83" y="378.80" width="1.82" height="8.00" fill="#ffb6c1" stroke="#e0904e" stroke-width="0.5"/><rect x="701.67" y="378.80" width="1.82" height="8.00" fill="#ffb6c1" stroke="#e0904e" stroke-width="0.5"/><rect x="704.52" y="378.80" width="1.82" height="8.00" fill="#ffb6c1" stroke="#e0904e" stroke-width="0.5"/><rect x="707.36" y="378.80" width="1.82" height="8.00" fill="#ffb6c1" stroke="#e0904e" stroke-width="0.5"/><rect x="675.90" y="401.80" width="2.31" height="8.00" rx="0.9" fill="#ff0000"/><rect x="678.94" y="401.80" width="1.82" height="8.00" fill="#ffb6c1" stroke="#e0904e" stroke-width="0.5"/><rect x="681.78" y="401.80" width="1.82" height="8.00" fill="#ffb6c1" stroke="#e0904e" stroke-width="0.5"/><rect x="684.62" y="401.80" width="1.82" height="8.00" fill="#ffb6c1" stroke="#e0904e" stroke-width="0.5"/><rect x="687.47" y="401.80" width="1.82" height="8.00" fill="#ffb6c1" stroke="#e0904e" stroke-width="0.5"/><rect x="690.31" y="401.80" width="1.82" height="8.00" fill="#ffb6c1" stroke="#e0904e" stroke-width="0.5"/><rect x="693.15" y="401.80" width="1.82" height="8.00" fill="#ffb6c1" stroke="#e0904e" stroke-width="0.5"/><rect x="695.99" y="401.80" width="1.82" height="8.00" fill="#ffb6c1" stroke="#e0904e" stroke-width="0.5"/><rect x="698.83" y="401.80" width="1.82" height="8.00" fill="#ffb6c1" stroke="#e0904e" stroke-width="0.5"/><rect x="701.67" y="401.80" width="1.82" height="8.00" fill="#ffb6c1" stroke="#e0904e" stroke-width="0.5"/><rect x="704.52" y="401.80" width="1.82" height="8.00" fill="#ffb6c1" stroke="#e0904e" stroke-width="0.5"/><rect x="707.36" y="401.80" width="1.82" height="8.00" fill="#ffb6c1" stroke="#e0904e" stroke-width="0.5"/><text x="686.40" y="396.50" font-size="4.8" fill="#2a4050" text-anchor="middle" opacity="0.9">C19</text><rect x="682.20" y="398.20" width="8.40" height="13.50" fill="none" stroke="#263a26" stroke-width="1.0"/><circle cx="686.4" cy="404.9" r="3.6" fill="#ffb6c1"/><text x="686.40" y="418.50" font-size="4.8" fill="#2a4050" text-anchor="middle" opacity="0.9">C33</text><rect x="682.20" y="420.10" width="8.40" height="14.20" fill="none" stroke="#263a26" stroke-width="1.0"/><rect x="684.05" y="422.09" width="4.70" height="4.26" fill="#ffb6c1" stroke="#de9058" stroke-width="0.6"/><rect x="684.05" y="428.05" width="4.70" height="4.26" fill="#ffb6c1" stroke="#de9058" stroke-width="0.6"/><text x="478.00" y="443.00" font-size="4.8" fill="#2a4050" text-anchor="middle" opacity="0.9">TP41</text><rect x="473.20" y="446.70" width="9.60" height="18.10" fill="#ffb6c1" stroke="#de9058" stroke-width="0.5"/><rect x="472.40" y="444.30" width="11.20" height="22.90" fill="none" stroke="#263a26" stroke-width="1.0"/><text x="0" y="0" font-size="7.8" fill="#1c2c28" text-anchor="middle" opacity="1" transform="translate(497.90 439.70) scale(0.97 1.2)">TP4</text><rect x="493.00" y="444.70" width="9.80" height="17.40" fill="#ffb6c1" stroke="#de9058" stroke-width="0.5"/><rect x="492.20" y="442.30" width="11.40" height="22.20" fill="none" stroke="#263a26" stroke-width="1.0"/><text x="0" y="0" font-size="8" fill="#1c2c28" text-anchor="end" opacity="1" transform="translate(469.00 478.60) scale(0.97 1.2)">TP38</text><rect x="470.10" y="466.90" width="9.60" height="17.70" fill="#ffb6c1" stroke="#de9058" stroke-width="0.5"/><rect x="469.30" y="464.50" width="11.20" height="22.50" fill="none" stroke="#263a26" stroke-width="1.0"/><text x="0" y="0" font-size="8" fill="#1c2c28" text-anchor="end" opacity="1" transform="translate(469.00 497.90) scale(0.97 1.2)">TP6</text><rect x="470.10" y="487.10" width="9.60" height="17.10" fill="#ffb6c1" stroke="#de9058" stroke-width="0.5"/><rect x="469.30" y="484.70" width="11.20" height="21.90" fill="none" stroke="#263a26" stroke-width="1.0"/><text x="497.90" y="487.50" font-size="4.8" fill="#2a4050" text-anchor="middle" opacity="0.9">TP39</text><rect x="493.00" y="491.60" width="9.80" height="18.70" fill="#ffb6c1" stroke="#de9058" stroke-width="0.5"/><rect x="492.20" y="489.20" width="11.40" height="23.50" fill="none" stroke="#263a26" stroke-width="1.0"/><text x="458.20" y="507.50" font-size="4.8" fill="#2a4050" text-anchor="middle" opacity="0.9">TP36</text><rect x="453.00" y="511.50" width="10.50" height="18.30" fill="#ffb6c1" stroke="#de9058" stroke-width="0.5"/><rect x="452.20" y="509.10" width="12.10" height="23.10" fill="none" stroke="#263a26" stroke-width="1.0"/><text x="534.00" y="462.70" font-size="4.8" fill="#2a4050" text-anchor="middle" opacity="0.9">TP26</text><rect x="529.10" y="466.80" width="10.10" height="17.80" fill="#ffb6c1" stroke="#de9058" stroke-width="0.5"/><rect x="528.30" y="464.40" width="11.70" height="22.60" fill="none" stroke="#263a26" stroke-width="1.0"/><text x="0" y="0" font-size="8" fill="#1c2c28" text-anchor="end" opacity="1" transform="translate(537.00 500.60) scale(0.97 1.2)">TP29</text><rect x="538.20" y="489.40" width="9.50" height="17.50" fill="#ffb6c1" stroke="#de9058" stroke-width="0.5"/><rect x="537.40" y="487.00" width="11.10" height="22.30" fill="none" stroke="#263a26" stroke-width="1.0"/><circle cx="466.10" cy="539.90" r="3.30" fill="#b8860b"/><text x="0" y="0" font-size="8" fill="#1c2c28" text-anchor="middle" opacity="1" transform="translate(466.70 549.30) scale(0.97 1.2)">TP37</text><rect x="457.50" y="552.30" width="18.70" height="10.30" fill="#ffb6c1" stroke="#de9058" stroke-width="0.5"/><rect x="455.30" y="551.50" width="23.10" height="11.90" fill="none" stroke="#263a26" stroke-width="1.0"/><text x="0" y="0" font-size="8" fill="#1c2c28" text-anchor="middle" opacity="1" transform="translate(489.20 555.10) scale(0.97 1.2)">TP40</text><rect x="480.00" y="558.20" width="18.20" height="9.60" fill="#ffb6c1" stroke="#de9058" stroke-width="0.5"/><rect x="477.80" y="557.40" width="22.60" height="11.20" fill="none" stroke="#263a26" stroke-width="1.0"/><text x="0" y="0" font-size="7.8" fill="#2a3a58" text-anchor="end" opacity="1" transform="translate(451.00 579.10) scale(0.97 1.2)">MH1</text><rect x="451.30" y="568.30" width="15.70" height="16.20" fill="none" stroke="#263a26" stroke-width="1.0"/><circle cx="459.20" cy="576.40" r="7.40" fill="#b8860b"/><text x="584.80" y="448.00" font-size="4.8" fill="#2a4050" text-anchor="middle" opacity="0.9">R38</text><rect x="580.70" y="449.30" width="8.10" height="14.10" fill="none" stroke="#263a26" stroke-width="1.0"/><rect x="582.48" y="451.27" width="4.54" height="4.23" fill="#ffb6c1" stroke="#de9058" stroke-width="0.6"/><rect x="582.48" y="457.20" width="4.54" height="4.23" fill="#ffb6c1" stroke="#de9058" stroke-width="0.6"/><rect x="578.40" y="466.70" width="13.00" height="23.70" fill="none" stroke="#263a26" stroke-width="1.0"/><circle cx="585.00" cy="473.20" r="3.60" fill="#b8860b"/><rect x="581.3" y="480.7" width="7.2" height="7.2" fill="#b8860b"/><text x="0" y="0" font-size="8" fill="#1c2c28" text-anchor="end" opacity="1" transform="translate(578.00 481.20) scale(0.97 1.2)">J10</text><text x="641.10" y="457.30" font-size="4.8" fill="#2a4050" text-anchor="middle" opacity="0.9">TP27</text><rect x="636.20" y="461.20" width="9.80" height="17.60" fill="#ffb6c1" stroke="#de9058" stroke-width="0.5"/><rect x="635.40" y="458.80" width="11.40" height="22.40" fill="none" stroke="#263a26" stroke-width="1.0"/><text x="0" y="0" font-size="8" fill="#1c2c28" text-anchor="end" opacity="1" transform="translate(643.00 495.10) scale(0.97 1.2)">TP25</text><rect x="644.60" y="483.90" width="10.00" height="17.50" fill="#ffb6c1" stroke="#de9058" stroke-width="0.5"/><rect x="643.80" y="481.50" width="11.60" height="22.30" fill="none" stroke="#263a26" stroke-width="1.0"/><text x="669.00" y="459.80" font-size="4.8" fill="#2a4050" text-anchor="middle" opacity="0.9">TP23</text><rect x="664.00" y="463.60" width="10.00" height="18.40" fill="#ffb6c1" stroke="#de9058" stroke-width="0.5"/><rect x="663.20" y="461.20" width="11.60" height="23.20" fill="none" stroke="#263a26" stroke-width="1.0"/><text x="666.40" y="492.50" font-size="4.8" fill="#2a4050" text-anchor="middle" opacity="0.9">R34</text><rect x="662.20" y="494.10" width="8.40" height="13.90" fill="none" stroke="#263a26" stroke-width="1.0"/><rect x="664.05" y="496.05" width="4.70" height="4.17" fill="#ffb6c1" stroke="#de9058" stroke-width="0.6"/><rect x="664.05" y="501.88" width="4.70" height="4.17" fill="#ffb6c1" stroke="#de9058" stroke-width="0.6"/><text x="677.70" y="492.00" font-size="4.8" fill="#2a4050" text-anchor="middle" opacity="0.9">U24</text><rect x="673.30" y="493.50" width="8.90" height="12.20" fill="none" stroke="#263a26" stroke-width="1.0"/><rect x="674.50" y="495.00" width="2.00" height="3.00" fill="#ffb6c1" stroke="#de9058" stroke-width="0.6"/><rect x="679.00" y="495.00" width="2.00" height="3.00" fill="#ffb6c1" stroke="#de9058" stroke-width="0.6"/><rect x="674.50" y="501.50" width="1.80" height="3.00" fill="#ffb6c1" stroke="#de9058" stroke-width="0.6"/><rect x="677.00" y="501.50" width="1.80" height="3.00" fill="#ffb6c1" stroke="#de9058" stroke-width="0.6"/><rect x="679.50" y="501.50" width="1.70" height="3.00" fill="#ffb6c1" stroke="#de9058" stroke-width="0.6"/><text x="686.00" y="567.00" font-size="4.8" fill="#2a4050" text-anchor="middle" opacity="0.9">TP21</text><rect x="681.00" y="570.80" width="10.00" height="18.40" fill="#ffb6c1" stroke="#de9058" stroke-width="0.5"/><rect x="680.20" y="568.40" width="11.60" height="23.20" fill="none" stroke="#263a26" stroke-width="1.0"/><text x="708.70" y="567.00" font-size="4.8" fill="#2a4050" text-anchor="middle" opacity="0.9">TP43</text><rect x="703.70" y="570.70" width="10.00" height="18.10" fill="#ffb6c1" stroke="#de9058" stroke-width="0.5"/><rect x="702.90" y="568.30" width="11.60" height="22.90" fill="none" stroke="#263a26" stroke-width="1.0"/><text x="722.80" y="566.50" font-size="5.8" fill="#2c3c38" text-anchor="middle" opacity="0.85">TP3</text><rect x="717.90" y="570.70" width="9.90" height="18.10" fill="#ffb6c1" stroke="#de9058" stroke-width="0.5"/><rect x="717.10" y="568.30" width="11.50" height="22.90" fill="none" stroke="#263a26" stroke-width="1.0"/><text x="0" y="0" font-size="7.8" fill="#1c2c28" text-anchor="middle" opacity="1" transform="translate(702.80 311.60) scale(0.97 1.2)">C56</text><rect x="695.60" y="314.10" width="14.10" height="8.20" fill="none" stroke="#263a26" stroke-width="1.0"/><rect x="697.29" y="315.74" width="4.51" height="4.92" fill="#ffb6c1" stroke="#de9058" stroke-width="0.6"/><rect x="703.50" y="315.74" width="4.51" height="4.92" fill="#ffb6c1" stroke="#de9058" stroke-width="0.6"/><rect x="685.10" y="323.20" width="36.20" height="24.30" fill="none" stroke="#263a26" stroke-width="1.0"/><rect x="686.3" y="325.5" width="11.8" height="3" rx="1.2" fill="#ffb6c1" stroke="#de9058" stroke-width="0.5"/><rect x="708.2" y="325.5" width="11.8" height="3" rx="1.2" fill="#ffb6c1" stroke="#de9058" stroke-width="0.5"/><rect x="686.3" y="331" width="11.8" height="3" rx="1.2" fill="#ffb6c1" stroke="#de9058" stroke-width="0.5"/><rect x="708.2" y="331" width="11.8" height="3" rx="1.2" fill="#ffb6c1" stroke="#de9058" stroke-width="0.5"/><rect x="686.3" y="336.5" width="11.8" height="3" rx="1.2" fill="#ffb6c1" stroke="#de9058" stroke-width="0.5"/><rect x="708.2" y="336.5" width="11.8" height="3" rx="1.2" fill="#ffb6c1" stroke="#de9058" stroke-width="0.5"/><rect x="686.3" y="342" width="11.8" height="3" rx="1.2" fill="#ffb6c1" stroke="#de9058" stroke-width="0.5"/><rect x="708.2" y="342" width="11.8" height="3" rx="1.2" fill="#ffb6c1" stroke="#de9058" stroke-width="0.5"/><text x="0" y="0" font-size="8" fill="#1c2c28" text-anchor="middle" opacity="1" transform="translate(703.00 354.50) scale(0.97 1.2)">U23</text><circle cx="675.50" cy="345.20" r="6.60" fill="#b8860b"/><circle cx="733.50" cy="345.20" r="6.60" fill="#b8860b"/><text x="0" y="0" font-size="7.4" fill="#2a3a58" text-anchor="middle" opacity="0.9" transform="translate(750.30 307.50) scale(0.97 1.2)">J8</text><rect x="736.40" y="310.20" width="28.20" height="15.90" fill="none" stroke="#263a26" stroke-width="1.0"/><rect x="741.50" y="311.30" width="1.10" height="4.20" fill="#ffb6c1" stroke="#de9058" stroke-width="0.6"/><rect x="743.25" y="311.30" width="1.10" height="4.20" fill="#ffb6c1" stroke="#de9058" stroke-width="0.6"/><rect x="745.00" y="311.30" width="1.10" height="4.20" fill="#ffb6c1" stroke="#de9058" stroke-width="0.6"/><rect x="746.75" y="311.30" width="1.10" height="4.20" fill="#ffb6c1" stroke="#de9058" stroke-width="0.6"/><rect x="748.50" y="311.30" width="1.10" height="4.20" fill="#ffb6c1" stroke="#de9058" stroke-width="0.6"/><rect x="750.25" y="311.30" width="1.10" height="4.20" fill="#ffb6c1" stroke="#de9058" stroke-width="0.6"/><rect x="752.00" y="311.30" width="1.10" height="4.20" fill="#ffb6c1" stroke="#de9058" stroke-width="0.6"/><rect x="753.75" y="311.30" width="1.10" height="4.20" fill="#ffb6c1" stroke="#de9058" stroke-width="0.6"/><rect x="755.50" y="311.30" width="1.10" height="4.20" fill="#ffb6c1" stroke="#de9058" stroke-width="0.6"/><rect x="757.25" y="311.30" width="1.10" height="4.20" fill="#ffb6c1" stroke="#de9058" stroke-width="0.6"/><rect x="737.20" y="321.00" width="2.40" height="4.50" fill="#ffb6c1" stroke="#de9058" stroke-width="0.6"/><rect x="761.30" y="321.00" width="2.40" height="4.50" fill="#ffb6c1" stroke="#de9058" stroke-width="0.6"/><text x="728.40" y="355.00" font-size="4.8" fill="#2a4050" text-anchor="middle" opacity="0.9">R30</text><rect x="724.20" y="356.50" width="8.40" height="13.90" fill="none" stroke="#263a26" stroke-width="1.0"/><rect x="726.05" y="358.45" width="4.70" height="4.17" fill="#ffb6c1" stroke="#de9058" stroke-width="0.6"/><rect x="726.05" y="364.28" width="4.70" height="4.17" fill="#ffb6c1" stroke="#de9058" stroke-width="0.6"/><text x="739.40" y="355.00" font-size="4.8" fill="#2a4050" text-anchor="middle" opacity="0.9">R19</text><rect x="735.20" y="356.50" width="8.33" height="13.50" fill="none" stroke="#263a26" stroke-width="1.0"/><rect x="737.03" y="358.39" width="4.66" height="4.05" fill="#ffb6c1" stroke="#de9058" stroke-width="0.6"/><rect x="737.03" y="364.06" width="4.66" height="4.05" fill="#ffb6c1" stroke="#de9058" stroke-width="0.6"/><rect x="735.20" y="370.00" width="8.33" height="13.50" fill="none" stroke="#263a26" stroke-width="1.0"/><rect x="737.03" y="371.89" width="4.66" height="4.05" fill="#ffb6c1" stroke="#de9058" stroke-width="0.6"/><rect x="737.03" y="377.56" width="4.66" height="4.05" fill="#ffb6c1" stroke="#de9058" stroke-width="0.6"/><text x="739.40" y="388.00" font-size="4.8" fill="#2a4050" text-anchor="middle" opacity="0.9">C22</text><text x="747.73" y="355.00" font-size="4.8" fill="#2a4050" text-anchor="middle" opacity="0.9">R18</text><rect x="743.53" y="356.50" width="8.33" height="13.50" fill="none" stroke="#263a26" stroke-width="1.0"/><rect x="745.36" y="358.39" width="4.66" height="4.05" fill="#ffb6c1" stroke="#de9058" stroke-width="0.6"/><rect x="745.36" y="364.06" width="4.66" height="4.05" fill="#ffb6c1" stroke="#de9058" stroke-width="0.6"/><rect x="743.53" y="370.00" width="8.33" height="13.50" fill="none" stroke="#263a26" stroke-width="1.0"/><rect x="745.36" y="371.89" width="4.66" height="4.05" fill="#ffb6c1" stroke="#de9058" stroke-width="0.6"/><rect x="745.36" y="377.56" width="4.66" height="4.05" fill="#ffb6c1" stroke="#de9058" stroke-width="0.6"/><text x="747.73" y="388.00" font-size="4.8" fill="#2a4050" text-anchor="middle" opacity="0.9">C23</text><text x="756.06" y="355.00" font-size="4.8" fill="#2a4050" text-anchor="middle" opacity="0.9">R17</text><rect x="751.86" y="356.50" width="8.33" height="13.50" fill="none" stroke="#263a26" stroke-width="1.0"/><rect x="753.69" y="358.39" width="4.66" height="4.05" fill="#ffb6c1" stroke="#de9058" stroke-width="0.6"/><rect x="753.69" y="364.06" width="4.66" height="4.05" fill="#ffb6c1" stroke="#de9058" stroke-width="0.6"/><rect x="751.86" y="370.00" width="8.33" height="13.50" fill="none" stroke="#263a26" stroke-width="1.0"/><rect x="753.69" y="371.89" width="4.66" height="4.05" fill="#ffb6c1" stroke="#de9058" stroke-width="0.6"/><rect x="753.69" y="377.56" width="4.66" height="4.05" fill="#ffb6c1" stroke="#de9058" stroke-width="0.6"/><text x="756.06" y="388.00" font-size="4.8" fill="#2a4050" text-anchor="middle" opacity="0.9">C24</text><text x="764.39" y="355.00" font-size="4.8" fill="#2a4050" text-anchor="middle" opacity="0.9">R16</text><rect x="760.19" y="356.50" width="8.33" height="13.50" fill="none" stroke="#263a26" stroke-width="1.0"/><rect x="762.02" y="358.39" width="4.66" height="4.05" fill="#ffb6c1" stroke="#de9058" stroke-width="0.6"/><rect x="762.02" y="364.06" width="4.66" height="4.05" fill="#ffb6c1" stroke="#de9058" stroke-width="0.6"/><rect x="760.19" y="370.00" width="8.33" height="13.50" fill="none" stroke="#263a26" stroke-width="1.0"/><rect x="762.02" y="371.89" width="4.66" height="4.05" fill="#ffb6c1" stroke="#de9058" stroke-width="0.6"/><rect x="762.02" y="377.56" width="4.66" height="4.05" fill="#ffb6c1" stroke="#de9058" stroke-width="0.6"/><text x="764.39" y="388.00" font-size="4.8" fill="#2a4050" text-anchor="middle" opacity="0.9">C25</text><text x="0" y="0" font-size="7.8" fill="#1c2c28" text-anchor="end" opacity="1" transform="translate(735.00 381.70) scale(0.97 1.2)">C53</text><rect x="721.30" y="384.50" width="13.90" height="8.00" fill="none" stroke="#263a26" stroke-width="1.0"/><rect x="722.97" y="386.10" width="4.45" height="4.80" fill="#ffb6c1" stroke="#de9058" stroke-width="0.6"/><rect x="729.08" y="386.10" width="4.45" height="4.80" fill="#ffb6c1" stroke="#de9058" stroke-width="0.6"/><rect x="717.8" y="390.3" width="17.7" height="24" fill="none" stroke="#00f0ff" stroke-width="3"/><rect x="720" y="391.6" width="13.5" height="1" fill="#263a26"/><rect x="721.20" y="394.30" width="3.00" height="4.90" fill="#ffb6c1" stroke="#de9058" stroke-width="0.6"/><rect x="721.20" y="406.00" width="3.00" height="4.80" fill="#ffb6c1" stroke="#de9058" stroke-width="0.6"/><rect x="725.50" y="394.30" width="3.00" height="4.90" fill="#ffb6c1" stroke="#de9058" stroke-width="0.6"/><rect x="725.50" y="406.00" width="3.00" height="4.80" fill="#ffb6c1" stroke="#de9058" stroke-width="0.6"/><rect x="729.80" y="394.30" width="3.00" height="4.90" fill="#ffb6c1" stroke="#de9058" stroke-width="0.6"/><rect x="729.80" y="406.00" width="3.00" height="4.80" fill="#ffb6c1" stroke="#de9058" stroke-width="0.6"/><text x="0" y="0" font-size="8" fill="#1c2c28" text-anchor="end" opacity="1" transform="translate(717.00 404.60) scale(0.97 1.2)">U22</text><rect x="737.20" y="397.50" width="25.30" height="35.10" fill="none" stroke="#263a26" stroke-width="1.3"/><rect x="739.00" y="399.10" width="1.59" height="7.00" fill="#ffb6c1" stroke="#e0904e" stroke-width="0.5"/><rect x="741.48" y="399.10" width="1.59" height="7.00" fill="#ffb6c1" stroke="#e0904e" stroke-width="0.5"/><rect x="743.96" y="399.10" width="1.59" height="7.00" fill="#ffb6c1" stroke="#e0904e" stroke-width="0.5"/><rect x="746.43" y="399.10" width="1.59" height="7.00" fill="#ffb6c1" stroke="#e0904e" stroke-width="0.5"/><rect x="748.91" y="399.10" width="1.59" height="7.00" fill="#ffb6c1" stroke="#e0904e" stroke-width="0.5"/><rect x="751.39" y="399.10" width="1.59" height="7.00" fill="#ffb6c1" stroke="#e0904e" stroke-width="0.5"/><rect x="753.87" y="399.10" width="1.59" height="7.00" fill="#ffb6c1" stroke="#e0904e" stroke-width="0.5"/><rect x="756.34" y="399.10" width="1.59" height="7.00" fill="#ffb6c1" stroke="#e0904e" stroke-width="0.5"/><rect x="758.82" y="399.10" width="1.59" height="7.00" fill="#ffb6c1" stroke="#e0904e" stroke-width="0.5"/><rect x="739.00" y="424.00" width="1.59" height="7.00" fill="#ffb6c1" stroke="#e0904e" stroke-width="0.5"/><rect x="741.48" y="424.00" width="1.59" height="7.00" fill="#ffb6c1" stroke="#e0904e" stroke-width="0.5"/><rect x="743.96" y="424.00" width="1.59" height="7.00" fill="#ffb6c1" stroke="#e0904e" stroke-width="0.5"/><rect x="746.43" y="424.00" width="1.59" height="7.00" fill="#ffb6c1" stroke="#e0904e" stroke-width="0.5"/><rect x="748.91" y="424.00" width="1.59" height="7.00" fill="#ffb6c1" stroke="#e0904e" stroke-width="0.5"/><rect x="751.39" y="424.00" width="1.59" height="7.00" fill="#ffb6c1" stroke="#e0904e" stroke-width="0.5"/><rect x="753.87" y="424.00" width="1.59" height="7.00" fill="#ffb6c1" stroke="#e0904e" stroke-width="0.5"/><rect x="756.34" y="424.00" width="1.59" height="7.00" fill="#ffb6c1" stroke="#e0904e" stroke-width="0.5"/><rect x="758.82" y="424.00" width="1.59" height="7.00" fill="#ffb6c1" stroke="#e0904e" stroke-width="0.5"/><text x="0" y="0" font-size="8.6" fill="#2a3a48" text-anchor="middle" opacity="1" transform="translate(749.70 417.50) scale(0.97 1.2)">U7</text><rect x="722.10" y="416.40" width="12.80" height="23.40" fill="none" stroke="#263a26" stroke-width="1.0"/><circle cx="728.50" cy="422.50" r="3.60" fill="#b8860b"/><rect x="725" y="430" width="7" height="7" fill="#b8860b"/><text x="0" y="0" font-size="8" fill="#1c2c28" text-anchor="end" opacity="1" transform="translate(722.00 430.90) scale(0.97 1.2)">J14</text><text x="0" y="0" font-size="8" fill="#1c2c28" text-anchor="end" opacity="1" transform="translate(752.00 441.00) scale(0.97 1.2)">C35</text><rect x="752.00" y="434.70" width="14.50" height="7.80" fill="none" stroke="#263a26" stroke-width="1.0"/><rect x="753.74" y="436.26" width="4.64" height="4.68" fill="#ffb6c1" stroke="#de9058" stroke-width="0.6"/><rect x="760.12" y="436.26" width="4.64" height="4.68" fill="#ffb6c1" stroke="#de9058" stroke-width="0.6"/><rect x="763.10" y="404.80" width="9.70" height="18.00" fill="#ffb6c1" stroke="#de9058" stroke-width="0.5"/><rect x="762.30" y="402.40" width="11.30" height="22.80" fill="none" stroke="#263a26" stroke-width="1.0"/><text x="0" y="0" font-size="7.6" fill="#1c2c28" text-anchor="middle" opacity="1" transform="translate(770.00 395.20) rotate(-90) scale(0.97 1.2)">TP1</text><text x="0" y="0" font-size="7.6" fill="#1c2c28" text-anchor="middle" opacity="1" transform="translate(776.20 376.50) rotate(-90) scale(0.97 1.2)">C20</text><circle cx="771.40" cy="323.20" r="4.70" fill="#b8860b"/><circle cx="779.10" cy="337.30" r="6.80" fill="#b8860b"/><circle cx="842.90" cy="323.20" r="4.70" fill="#b8860b"/><circle cx="835.10" cy="337.30" r="6.80" fill="#b8860b"/><circle cx="869.00" cy="343.60" r="4.90" fill="#b8860b"/><circle cx="890.00" cy="343.60" r="4.90" fill="#b8860b"/><circle cx="911.00" cy="343.60" r="4.90" fill="#b8860b"/><circle cx="955.60" cy="313.50" r="4.80" fill="#b8860b"/><circle cx="955.60" cy="337.80" r="4.80" fill="#b8860b"/><text x="0" y="0" font-size="7.8" fill="#1c2c28" text-anchor="middle" opacity="1" transform="translate(806.20 366.70) scale(0.97 1.2)">R33</text><rect x="799.20" y="369.20" width="13.80" height="8.20" fill="none" stroke="#263a26" stroke-width="1.0"/><rect x="800.86" y="370.84" width="4.42" height="4.92" fill="#ffb6c1" stroke="#de9058" stroke-width="0.6"/><rect x="806.93" y="370.84" width="4.42" height="4.92" fill="#ffb6c1" stroke="#de9058" stroke-width="0.6"/><circle cx="782.40" cy="373.30" r="3.50" fill="#b8860b"/><circle cx="831.90" cy="373.30" r="3.50" fill="#b8860b"/><text x="0" y="0" font-size="7.8" fill="#1c2c28" text-anchor="middle" opacity="1" transform="translate(788.50 387.50) scale(0.97 1.2)">R32</text><rect x="781.20" y="390.20" width="14.50" height="8.10" fill="none" stroke="#263a26" stroke-width="1.0"/><rect x="782.94" y="391.82" width="4.64" height="4.86" fill="#ffb6c1" stroke="#de9058" stroke-width="0.6"/><rect x="789.32" y="391.82" width="4.64" height="4.86" fill="#ffb6c1" stroke="#de9058" stroke-width="0.6"/><circle cx="784.60" cy="404.60" r="3.40" fill="#b8860b"/><circle cx="793.60" cy="404.60" r="3.40" fill="#b8860b"/><text x="0" y="0" font-size="7.8" fill="#1c2c28" text-anchor="middle" opacity="1" transform="translate(787.00 411.30) scale(0.97 1.2)">R3</text><rect x="780.30" y="414.20" width="13.60" height="8.10" fill="none" stroke="#263a26" stroke-width="1.0"/><rect x="781.93" y="415.82" width="4.35" height="4.86" fill="#ffb6c1" stroke="#de9058" stroke-width="0.6"/><rect x="787.92" y="415.82" width="4.35" height="4.86" fill="#ffb6c1" stroke="#de9058" stroke-width="0.6"/><circle cx="780.30" cy="427.30" r="3.50" fill="#b8860b"/><circle cx="791.30" cy="427.30" r="3.50" fill="#b8860b"/><circle cx="820.50" cy="404.70" r="3.30" fill="#b8860b"/><circle cx="829.30" cy="404.70" r="3.30" fill="#b8860b"/><circle cx="816.20" cy="416.20" r="3.40" fill="#b8860b"/><circle cx="825.20" cy="416.20" r="3.40" fill="#b8860b"/><circle cx="834.20" cy="416.20" r="3.40" fill="#b8860b"/><circle cx="822.80" cy="427.30" r="3.40" fill="#b8860b"/><circle cx="834.20" cy="427.30" r="3.40" fill="#b8860b"/><text x="0" y="0" font-size="6.6" fill="#1c2c28" text-anchor="middle" opacity="1" transform="translate(843.50 387.50) scale(0.97 1.2)">C1</text><rect x="839.40" y="389.90" width="8.10" height="13.30" fill="none" stroke="#263a26" stroke-width="1.0"/><rect x="841.18" y="391.76" width="4.54" height="3.99" fill="#ffb6c1" stroke="#de9058" stroke-width="0.6"/><rect x="841.18" y="397.35" width="4.54" height="3.99" fill="#ffb6c1" stroke="#de9058" stroke-width="0.6"/><rect x="839.40" y="403.80" width="8.10" height="13.50" fill="none" stroke="#263a26" stroke-width="1.0"/><rect x="841.18" y="405.69" width="4.54" height="4.05" fill="#ffb6c1" stroke="#de9058" stroke-width="0.6"/><rect x="841.18" y="411.36" width="4.54" height="4.05" fill="#ffb6c1" stroke="#de9058" stroke-width="0.6"/><rect x="839.40" y="417.70" width="8.10" height="13.70" fill="none" stroke="#263a26" stroke-width="1.0"/><rect x="841.18" y="419.62" width="4.54" height="4.11" fill="#ffb6c1" stroke="#de9058" stroke-width="0.6"/><rect x="841.18" y="425.37" width="4.54" height="4.11" fill="#ffb6c1" stroke="#de9058" stroke-width="0.6"/><text x="0" y="0" font-size="8" fill="#1c2c28" text-anchor="end" opacity="1" transform="translate(839.00 413.00) scale(0.97 1.2)">R1</text><text x="0" y="0" font-size="8" fill="#1c2c28" text-anchor="start" opacity="1" transform="translate(848.70 427.50) scale(0.97 1.2)">R2</text><text x="0" y="0" font-size="7.6" fill="#1c2c28" text-anchor="middle" opacity="1" transform="translate(835.00 426.20) rotate(-90) scale(0.97 1.2)">TP32</text><rect x="823.40" y="437.30" width="18.10" height="9.40" fill="#ffb6c1" stroke="#de9058" stroke-width="0.5"/><rect x="821.20" y="436.50" width="22.50" height="11.00" fill="none" stroke="#263a26" stroke-width="1.0"/><rect x="845.60" y="438.00" width="13.90" height="8.30" fill="none" stroke="#263a26" stroke-width="1.0"/><rect x="847.27" y="439.66" width="4.45" height="4.98" fill="#ffb6c1" stroke="#de9058" stroke-width="0.6"/><rect x="853.38" y="439.66" width="4.45" height="4.98" fill="#ffb6c1" stroke="#de9058" stroke-width="0.6"/><text x="0" y="0" font-size="7.8" fill="#1c2c28" text-anchor="start" opacity="1" transform="translate(860.00 444.30) scale(0.97 1.2)">C37</text><text x="815.40" y="445.30" font-size="4.8" fill="#2a4050" text-anchor="middle" opacity="0.9">R27</text><rect x="811.20" y="446.70" width="8.50" height="13.90" fill="none" stroke="#263a26" stroke-width="1.0"/><rect x="813.07" y="448.65" width="4.76" height="4.17" fill="#ffb6c1" stroke="#de9058" stroke-width="0.6"/><rect x="813.07" y="454.48" width="4.76" height="4.17" fill="#ffb6c1" stroke="#de9058" stroke-width="0.6"/><circle cx="803.80" cy="459.20" r="3.30" fill="#b8860b"/><rect x="834.20" y="447.50" width="12.80" height="22.90" fill="none" stroke="#263a26" stroke-width="1.0"/><circle cx="840.80" cy="453.20" r="3.50" fill="#b8860b"/><rect x="837.1" y="461.2" width="7.3" height="6.7" fill="#b8860b"/><circle cx="829.00" cy="458.80" r="3.80" fill="#b8860b"/><text x="0" y="0" font-size="8" fill="#1c2c28" text-anchor="end" opacity="1" transform="translate(834.00 461.20) scale(0.97 1.2)">J15</text><text x="0" y="0" font-size="8" fill="#1c2c28" text-anchor="start" opacity="1" transform="translate(849.00 454.80) scale(0.97 1.2)">C42</text><rect x="848.30" y="457.40" width="14.30" height="8.40" fill="none" stroke="#263a26" stroke-width="1.0"/><rect x="850.02" y="459.08" width="4.58" height="5.04" fill="#ffb6c1" stroke="#de9058" stroke-width="0.6"/><rect x="856.31" y="459.08" width="4.58" height="5.04" fill="#ffb6c1" stroke="#de9058" stroke-width="0.6"/><text x="0" y="0" font-size="8" fill="#1c2c28" text-anchor="middle" opacity="1" transform="translate(813.00 470.20) scale(0.97 1.2)">TP28</text><rect x="803.40" y="473.60" width="18.40" height="10.20" fill="#ffb6c1" stroke="#de9058" stroke-width="0.5"/><rect x="801.20" y="472.80" width="22.80" height="11.80" fill="none" stroke="#263a26" stroke-width="1.0"/><rect x="850.20" y="467.50" width="10.10" height="18.90" fill="none" stroke="#263a26" stroke-width="1.0"/><rect x="851.30" y="468.80" width="1.20" height="3.70" fill="#ffb6c1" stroke="#de9058" stroke-width="0.6"/><rect x="851.30" y="481.50" width="1.20" height="3.70" fill="#ffb6c1" stroke="#de9058" stroke-width="0.6"/><rect x="853.50" y="468.80" width="1.20" height="3.70" fill="#ffb6c1" stroke="#de9058" stroke-width="0.6"/><rect x="853.50" y="481.50" width="1.20" height="3.70" fill="#ffb6c1" stroke="#de9058" stroke-width="0.6"/><rect x="855.70" y="468.80" width="1.20" height="3.70" fill="#ffb6c1" stroke="#de9058" stroke-width="0.6"/><rect x="855.70" y="481.50" width="1.20" height="3.70" fill="#ffb6c1" stroke="#de9058" stroke-width="0.6"/><rect x="857.90" y="468.80" width="1.20" height="3.70" fill="#ffb6c1" stroke="#de9058" stroke-width="0.6"/><rect x="857.90" y="481.50" width="1.20" height="3.70" fill="#ffb6c1" stroke="#de9058" stroke-width="0.6"/><text x="0" y="0" font-size="8" fill="#1c2c28" text-anchor="end" opacity="1" transform="translate(850.00 479.70) scale(0.97 1.2)">U19</text><text x="0" y="0" font-size="8" fill="#1c2c28" text-anchor="end" opacity="1" transform="translate(805.00 497.70) scale(0.97 1.2)">U25</text><rect x="812.40" y="489.20" width="9.00" height="12.30" fill="none" stroke="#263a26" stroke-width="1.0"/><rect x="813.50" y="490.30" width="2.00" height="3.20" fill="#ffb6c1" stroke="#de9058" stroke-width="0.6"/><rect x="816.20" y="490.30" width="1.50" height="3.20" fill="#ffb6c1" stroke="#de9058" stroke-width="0.6"/><rect x="818.40" y="490.30" width="1.90" height="3.20" fill="#ffb6c1" stroke="#de9058" stroke-width="0.6"/><rect x="813.50" y="497.20" width="2.00" height="3.20" fill="#ffb6c1" stroke="#de9058" stroke-width="0.6"/><rect x="818.40" y="497.20" width="1.90" height="3.20" fill="#ffb6c1" stroke="#de9058" stroke-width="0.6"/><text x="826.60" y="489.60" font-size="4.8" fill="#2a4050" text-anchor="middle" opacity="0.9">R35</text><rect x="822.60" y="491.10" width="8.10" height="13.50" fill="none" stroke="#263a26" stroke-width="1.0"/><rect x="824.38" y="492.99" width="4.54" height="4.05" fill="#ffb6c1" stroke="#de9058" stroke-width="0.6"/><rect x="824.38" y="498.66" width="4.54" height="4.05" fill="#ffb6c1" stroke="#de9058" stroke-width="0.6"/><text x="0" y="0" font-size="8" fill="#1c2c28" text-anchor="end" opacity="1" transform="translate(847.00 494.60) scale(0.97 1.2)">C45</text><rect x="847.20" y="488.40" width="14.60" height="8.10" fill="none" stroke="#263a26" stroke-width="1.0"/><rect x="848.95" y="490.02" width="4.67" height="4.86" fill="#ffb6c1" stroke="#de9058" stroke-width="0.6"/><rect x="855.38" y="490.02" width="4.67" height="4.86" fill="#ffb6c1" stroke="#de9058" stroke-width="0.6"/><rect x="810.40" y="506.20" width="10.20" height="17.70" fill="#ffb6c1" stroke="#de9058" stroke-width="0.5"/><rect x="809.60" y="503.80" width="11.80" height="22.50" fill="none" stroke="#263a26" stroke-width="1.0"/><text x="815.50" y="515.50" font-size="4.8" fill="#4a3a6a" text-anchor="middle" opacity="0.8">TP24</text><text x="787.40" y="518.00" font-size="4.8" fill="#2a4050" text-anchor="middle" opacity="0.9">U2</text><rect x="783.40" y="519.40" width="8.20" height="13.20" fill="none" stroke="#263a26" stroke-width="1.0"/><rect x="785.20" y="521.25" width="4.59" height="3.96" fill="#ffb6c1" stroke="#de9058" stroke-width="0.6"/><rect x="785.20" y="526.79" width="4.59" height="3.96" fill="#ffb6c1" stroke="#de9058" stroke-width="0.6"/><text x="0" y="0" font-size="8" fill="#1c2c28" text-anchor="middle" opacity="1" transform="translate(801.80 519.70) scale(0.97 1.2)">C36</text><rect x="795.10" y="522.40" width="13.50" height="7.90" fill="none" stroke="#263a26" stroke-width="1.0"/><rect x="796.72" y="523.98" width="4.32" height="4.74" fill="#ffb6c1" stroke="#de9058" stroke-width="0.6"/><rect x="802.66" y="523.98" width="4.32" height="4.74" fill="#ffb6c1" stroke="#de9058" stroke-width="0.6"/><rect x="793.30" y="532.40" width="17.60" height="17.00" fill="none" stroke="#263a26" stroke-width="1.0"/><rect x="797.50" y="533.50" width="1.10" height="2.50" fill="#ffb6c1" stroke="#de9058" stroke-width="0.6"/><rect x="797.50" y="545.80" width="1.10" height="2.50" fill="#ffb6c1" stroke="#de9058" stroke-width="0.6"/><rect x="794.30" y="536.50" width="2.50" height="1.10" fill="#ffb6c1" stroke="#de9058" stroke-width="0.6"/><rect x="807.40" y="536.50" width="2.50" height="1.10" fill="#ffb6c1" stroke="#de9058" stroke-width="0.6"/><rect x="799.90" y="533.50" width="1.10" height="2.50" fill="#ffb6c1" stroke="#de9058" stroke-width="0.6"/><rect x="799.90" y="545.80" width="1.10" height="2.50" fill="#ffb6c1" stroke="#de9058" stroke-width="0.6"/><rect x="794.30" y="538.90" width="2.50" height="1.10" fill="#ffb6c1" stroke="#de9058" stroke-width="0.6"/><rect x="807.40" y="538.90" width="2.50" height="1.10" fill="#ffb6c1" stroke="#de9058" stroke-width="0.6"/><rect x="802.30" y="533.50" width="1.10" height="2.50" fill="#ffb6c1" stroke="#de9058" stroke-width="0.6"/><rect x="802.30" y="545.80" width="1.10" height="2.50" fill="#ffb6c1" stroke="#de9058" stroke-width="0.6"/><rect x="794.30" y="541.30" width="2.50" height="1.10" fill="#ffb6c1" stroke="#de9058" stroke-width="0.6"/><rect x="807.40" y="541.30" width="2.50" height="1.10" fill="#ffb6c1" stroke="#de9058" stroke-width="0.6"/><rect x="804.70" y="533.50" width="1.10" height="2.50" fill="#ffb6c1" stroke="#de9058" stroke-width="0.6"/><rect x="804.70" y="545.80" width="1.10" height="2.50" fill="#ffb6c1" stroke="#de9058" stroke-width="0.6"/><rect x="794.30" y="543.70" width="2.50" height="1.10" fill="#ffb6c1" stroke="#de9058" stroke-width="0.6"/><rect x="807.40" y="543.70" width="2.50" height="1.10" fill="#ffb6c1" stroke="#de9058" stroke-width="0.6"/><circle cx="802.30" cy="540.80" r="2.60" fill="#b8860b"/><text x="0" y="0" font-size="8" fill="#1c2c28" text-anchor="end" opacity="1" transform="translate(793.00 543.50) scale(0.97 1.2)">U14</text><rect x="811.60" y="528.30" width="13.80" height="7.80" fill="none" stroke="#263a26" stroke-width="1.0"/><rect x="813.26" y="529.86" width="4.42" height="4.68" fill="#ffb6c1" stroke="#de9058" stroke-width="0.6"/><rect x="819.33" y="529.86" width="4.42" height="4.68" fill="#ffb6c1" stroke="#de9058" stroke-width="0.6"/><rect x="811.60" y="536.80" width="13.80" height="7.60" fill="none" stroke="#263a26" stroke-width="1.0"/><rect x="813.26" y="538.32" width="4.42" height="4.56" fill="#ffb6c1" stroke="#de9058" stroke-width="0.6"/><rect x="819.33" y="538.32" width="4.42" height="4.56" fill="#ffb6c1" stroke="#de9058" stroke-width="0.6"/><text x="0" y="0" font-size="8" fill="#1c2c28" text-anchor="start" opacity="1" transform="translate(812.10 551.80) scale(0.97 1.2)">R21</text><rect x="795.10" y="550.00" width="7.90" height="14.40" fill="none" stroke="#263a26" stroke-width="1.0"/><rect x="796.84" y="552.02" width="4.42" height="4.32" fill="#ffb6c1" stroke="#de9058" stroke-width="0.6"/><rect x="796.84" y="558.06" width="4.42" height="4.32" fill="#ffb6c1" stroke="#de9058" stroke-width="0.6"/><rect x="803.00" y="550.00" width="8.30" height="14.40" fill="none" stroke="#263a26" stroke-width="1.0"/><rect x="804.83" y="552.02" width="4.65" height="4.32" fill="#ffb6c1" stroke="#de9058" stroke-width="0.6"/><rect x="804.83" y="558.06" width="4.65" height="4.32" fill="#ffb6c1" stroke="#de9058" stroke-width="0.6"/><text x="0" y="0" font-size="8" fill="#1c2c28" text-anchor="end" opacity="1" transform="translate(794.00 559.50) scale(0.97 1.2)">R14</text><text x="807.00" y="568.50" font-size="4.8" fill="#2a4050" text-anchor="middle" opacity="0.9">R18</text><text x="782.00" y="567.00" font-size="4.8" fill="#2a4050" text-anchor="middle" opacity="0.9">TP22</text><rect x="777.10" y="570.70" width="9.80" height="18.10" fill="#ffb6c1" stroke="#de9058" stroke-width="0.5"/><rect x="776.30" y="568.30" width="11.40" height="22.90" fill="none" stroke="#263a26" stroke-width="1.0"/><text x="793.20" y="571.00" font-size="4.8" fill="#2a4050" text-anchor="middle" opacity="0.9">R31</text><rect x="789.20" y="572.40" width="7.90" height="14.10" fill="none" stroke="#263a26" stroke-width="1.0"/><rect x="790.94" y="574.37" width="4.42" height="4.23" fill="#ffb6c1" stroke="#de9058" stroke-width="0.6"/><rect x="790.94" y="580.30" width="4.42" height="4.23" fill="#ffb6c1" stroke="#de9058" stroke-width="0.6"/><text x="0" y="0" font-size="8.2" fill="#1c2c28" text-anchor="middle" opacity="1" transform="translate(751.80 529.80) scale(0.97 1.2)">D1</text><rect x="731.20" y="532.10" width="41.40" height="43.20" fill="none" stroke="#263a26" stroke-width="1.0"/><rect x="746.00" y="543.60" width="3.20" height="7.60" fill="#ffb6c1" stroke="#de9058" stroke-width="0.6"/><rect x="746.00" y="557.10" width="3.20" height="7.70" fill="#ffb6c1" stroke="#de9058" stroke-width="0.6"/><rect x="750.10" y="543.60" width="3.20" height="7.60" fill="#ffb6c1" stroke="#de9058" stroke-width="0.6"/><rect x="750.10" y="557.10" width="3.20" height="7.70" fill="#ffb6c1" stroke="#de9058" stroke-width="0.6"/><rect x="754.20" y="543.60" width="3.20" height="7.60" fill="#ffb6c1" stroke="#de9058" stroke-width="0.6"/><rect x="754.20" y="557.10" width="3.20" height="7.70" fill="#ffb6c1" stroke="#de9058" stroke-width="0.6"/><circle cx="762.00" cy="540.40" r="4.60" fill="#b8860b"/><rect x="827.30" y="517.00" width="203.10" height="74.50" fill="none" stroke="#263a26" stroke-width="1.0"/><text x="0" y="0" font-size="8.2" fill="#1c2c28" text-anchor="middle" opacity="1" transform="translate(928.50 556.90) scale(0.97 1.2)">LS1</text><circle cx="838.00" cy="525.40" r="5.60" fill="#b8860b"/><circle cx="838.00" cy="582.60" r="5.60" fill="#b8860b"/><circle cx="975.30" cy="525.30" r="5.60" fill="#b8860b"/><circle cx="975.30" cy="582.80" r="5.60" fill="#b8860b"/><rect x="999.40" y="530.70" width="14.20" height="8.30" fill="none" stroke="#263a26" stroke-width="1.0"/><rect x="1001.10" y="532.36" width="4.54" height="4.98" fill="#ffb6c1" stroke="#de9058" stroke-width="0.6"/><rect x="1007.35" y="532.36" width="4.54" height="4.98" fill="#ffb6c1" stroke="#de9058" stroke-width="0.6"/><circle cx="1019.50" cy="545.40" r="3.60" fill="#b8860b"/><circle cx="1019.50" cy="562.80" r="3.60" fill="#b8860b"/><rect x="992.40" y="571.30" width="23.20" height="11.10" fill="none" stroke="#263a26" stroke-width="1.0"/><rect x="995.00" y="572.30" width="18.00" height="9.10" fill="#ffb6c1" stroke="#de9058" stroke-width="0.6"/><text x="0" y="0" font-size="8.4" fill="#2a3a68" text-anchor="middle" opacity="1" transform="translate(1004.00 579.40) scale(0.97 1.2)">TP8</text><text x="0" y="0" font-size="8" fill="#1c2c28" text-anchor="middle" opacity="1" transform="translate(875.00 312.60) scale(0.97 1.2)">TP30</text><rect x="865.50" y="316.10" width="18.10" height="9.70" fill="#ffb6c1" stroke="#de9058" stroke-width="0.5"/><rect x="863.30" y="315.30" width="22.50" height="11.30" fill="none" stroke="#263a26" stroke-width="1.0"/><text x="0" y="0" font-size="8" fill="#1c2c28" text-anchor="middle" opacity="1" transform="translate(873.00 350.50) scale(0.97 1.2)">C2</text><rect x="863.30" y="353.20" width="18.70" height="9.20" fill="none" stroke="#263a26" stroke-width="1.0"/><rect x="865.54" y="355.04" width="5.98" height="5.52" fill="#ffb6c1" stroke="#de9058" stroke-width="0.6"/><rect x="873.77" y="355.04" width="5.98" height="5.52" fill="#ffb6c1" stroke="#de9058" stroke-width="0.6"/><text x="871.80" y="379.50" font-size="4.8" fill="#2a4050" text-anchor="middle" opacity="0.9">C35</text><rect x="867.20" y="381.10" width="9.30" height="18.90" fill="none" stroke="#263a26" stroke-width="1.0"/><rect x="869.25" y="383.75" width="5.21" height="5.67" fill="#ffb6c1" stroke="#de9058" stroke-width="0.6"/><rect x="869.25" y="391.68" width="5.21" height="5.67" fill="#ffb6c1" stroke="#de9058" stroke-width="0.6"/><text x="0" y="0" font-size="8" fill="#1c2c28" text-anchor="middle" opacity="1" transform="translate(887.00 376.80) scale(0.97 1.2)">U10</text><rect x="878.30" y="379.10" width="17.40" height="23.60" fill="none" stroke="#263a26" stroke-width="1.0"/><rect x="881.61" y="383.35" width="2.52" height="5.19" fill="#ffb6c1" stroke="#de9058" stroke-width="0.6"/><rect x="885.20" y="383.35" width="2.52" height="5.19" fill="#ffb6c1" stroke="#de9058" stroke-width="0.6"/><rect x="888.80" y="383.35" width="2.52" height="5.19" fill="#ffb6c1" stroke="#de9058" stroke-width="0.6"/><rect x="881.61" y="393.26" width="2.52" height="5.19" fill="#ffb6c1" stroke="#de9058" stroke-width="0.6"/><rect x="885.20" y="393.26" width="2.52" height="5.19" fill="#ffb6c1" stroke="#de9058" stroke-width="0.6"/><rect x="888.80" y="393.26" width="2.52" height="5.19" fill="#ffb6c1" stroke="#de9058" stroke-width="0.6"/><text x="902.90" y="382.00" font-size="4.8" fill="#2a4050" text-anchor="middle" opacity="0.9">C34</text><rect x="898.30" y="383.80" width="9.20" height="18.50" fill="none" stroke="#263a26" stroke-width="1.0"/><rect x="900.32" y="386.39" width="5.15" height="5.55" fill="#ffb6c1" stroke="#de9058" stroke-width="0.6"/><rect x="900.32" y="394.16" width="5.15" height="5.55" fill="#ffb6c1" stroke="#de9058" stroke-width="0.6"/><text x="0" y="0" font-size="8.2" fill="#1c2c28" text-anchor="middle" opacity="1" transform="translate(920.30 378.60) scale(0.97 1.2)">L1</text><rect x="909.30" y="381.10" width="22.60" height="23.50" fill="none" stroke="#263a26" stroke-width="1.0"/><rect x="916.00" y="384.60" width="7.50" height="3.40" fill="#ffb6c1" stroke="#de9058" stroke-width="0.6"/><rect x="916.00" y="397.60" width="7.50" height="3.40" fill="#ffb6c1" stroke="#de9058" stroke-width="0.6"/><rect x="873.30" y="404.40" width="14.20" height="8.00" fill="none" stroke="#263a26" stroke-width="1.0"/><rect x="875.00" y="406.00" width="4.54" height="4.80" fill="#ffb6c1" stroke="#de9058" stroke-width="0.6"/><rect x="881.25" y="406.00" width="4.54" height="4.80" fill="#ffb6c1" stroke="#de9058" stroke-width="0.6"/><rect x="887.50" y="404.40" width="14.20" height="8.00" fill="none" stroke="#263a26" stroke-width="1.0"/><rect x="889.20" y="406.00" width="4.54" height="4.80" fill="#ffb6c1" stroke="#de9058" stroke-width="0.6"/><rect x="895.45" y="406.00" width="4.54" height="4.80" fill="#ffb6c1" stroke="#de9058" stroke-width="0.6"/><text x="0" y="0" font-size="8" fill="#1c2c28" text-anchor="end" opacity="1" transform="translate(873.00 410.40) scale(0.97 1.2)">R22</text><text x="0" y="0" font-size="8" fill="#1c2c28" text-anchor="middle" opacity="1" transform="translate(894.60 419.40) scale(0.97 1.2)">R23</text><circle cx="883.20" cy="427.80" r="3.80" fill="#b8860b"/><circle cx="894.38" cy="427.80" r="3.80" fill="#b8860b"/><circle cx="905.56" cy="427.80" r="3.80" fill="#b8860b"/><circle cx="916.74" cy="427.80" r="3.80" fill="#b8860b"/><circle cx="927.92" cy="427.80" r="3.80" fill="#b8860b"/><circle cx="883.20" cy="439.20" r="3.80" fill="#b8860b"/><circle cx="894.38" cy="439.20" r="3.80" fill="#b8860b"/><circle cx="905.56" cy="439.20" r="3.80" fill="#b8860b"/><circle cx="916.74" cy="439.20" r="3.80" fill="#b8860b"/><circle cx="927.92" cy="439.20" r="3.80" fill="#b8860b"/><text x="0" y="0" font-size="8" fill="#1c2c28" text-anchor="start" opacity="1" transform="translate(887.20 449.30) scale(0.97 1.2)">C41</text><rect x="887.20" y="452.20" width="13.40" height="8.10" fill="none" stroke="#263a26" stroke-width="1.0"/><rect x="888.81" y="453.82" width="4.29" height="4.86" fill="#ffb6c1" stroke="#de9058" stroke-width="0.6"/><rect x="894.70" y="453.82" width="4.29" height="4.86" fill="#ffb6c1" stroke="#de9058" stroke-width="0.6"/><text x="0" y="0" font-size="7.6" fill="#1c2c28" text-anchor="middle" opacity="1" transform="translate(910.00 451.80) rotate(-90) scale(0.97 1.2)">U18</text><rect x="893.60" y="460.30" width="26.10" height="34.20" fill="none" stroke="#263a26" stroke-width="1.3"/><rect x="895.40" y="461.90" width="1.64" height="7.00" fill="#ffb6c1" stroke="#e0904e" stroke-width="0.5"/><rect x="897.97" y="461.90" width="1.64" height="7.00" fill="#ffb6c1" stroke="#e0904e" stroke-width="0.5"/><rect x="900.53" y="461.90" width="1.64" height="7.00" fill="#ffb6c1" stroke="#e0904e" stroke-width="0.5"/><rect x="903.10" y="461.90" width="1.64" height="7.00" fill="#ffb6c1" stroke="#e0904e" stroke-width="0.5"/><rect x="905.67" y="461.90" width="1.64" height="7.00" fill="#ffb6c1" stroke="#e0904e" stroke-width="0.5"/><rect x="908.23" y="461.90" width="1.64" height="7.00" fill="#ffb6c1" stroke="#e0904e" stroke-width="0.5"/><rect x="910.80" y="461.90" width="1.64" height="7.00" fill="#ffb6c1" stroke="#e0904e" stroke-width="0.5"/><rect x="913.37" y="461.90" width="1.64" height="7.00" fill="#ffb6c1" stroke="#e0904e" stroke-width="0.5"/><rect x="915.93" y="461.90" width="1.64" height="7.00" fill="#ffb6c1" stroke="#e0904e" stroke-width="0.5"/><rect x="895.40" y="485.90" width="1.64" height="7.00" fill="#ffb6c1" stroke="#e0904e" stroke-width="0.5"/><rect x="897.97" y="485.90" width="1.64" height="7.00" fill="#ffb6c1" stroke="#e0904e" stroke-width="0.5"/><rect x="900.53" y="485.90" width="1.64" height="7.00" fill="#ffb6c1" stroke="#e0904e" stroke-width="0.5"/><rect x="903.10" y="485.90" width="1.64" height="7.00" fill="#ffb6c1" stroke="#e0904e" stroke-width="0.5"/><rect x="905.67" y="485.90" width="1.64" height="7.00" fill="#ffb6c1" stroke="#e0904e" stroke-width="0.5"/><rect x="908.23" y="485.90" width="1.64" height="7.00" fill="#ffb6c1" stroke="#e0904e" stroke-width="0.5"/><rect x="910.80" y="485.90" width="1.64" height="7.00" fill="#ffb6c1" stroke="#e0904e" stroke-width="0.5"/><rect x="913.37" y="485.90" width="1.64" height="7.00" fill="#ffb6c1" stroke="#e0904e" stroke-width="0.5"/><rect x="915.93" y="485.90" width="1.64" height="7.00" fill="#ffb6c1" stroke="#e0904e" stroke-width="0.5"/><text x="0" y="0" font-size="8" fill="#1c2c28" text-anchor="middle" opacity="1" transform="translate(877.50 455.10) scale(0.97 1.2)">C48</text><rect x="870.40" y="457.60" width="14.20" height="8.10" fill="none" stroke="#263a26" stroke-width="1.0"/><rect x="872.10" y="459.22" width="4.54" height="4.86" fill="#ffb6c1" stroke="#de9058" stroke-width="0.6"/><rect x="878.35" y="459.22" width="4.54" height="4.86" fill="#ffb6c1" stroke="#de9058" stroke-width="0.6"/><rect x="873.70" y="467.60" width="8.90" height="19.00" fill="none" stroke="#263a26" stroke-width="1.0"/><rect x="874.80" y="469.00" width="1.00" height="4.00" fill="#ffb6c1" stroke="#de9058" stroke-width="0.6"/><rect x="874.80" y="481.00" width="1.00" height="4.00" fill="#ffb6c1" stroke="#de9058" stroke-width="0.6"/><rect x="876.80" y="469.00" width="1.00" height="4.00" fill="#ffb6c1" stroke="#de9058" stroke-width="0.6"/><rect x="876.80" y="481.00" width="1.00" height="4.00" fill="#ffb6c1" stroke="#de9058" stroke-width="0.6"/><rect x="878.80" y="469.00" width="1.00" height="4.00" fill="#ffb6c1" stroke="#de9058" stroke-width="0.6"/><rect x="878.80" y="481.00" width="1.00" height="4.00" fill="#ffb6c1" stroke="#de9058" stroke-width="0.6"/><rect x="880.80" y="469.00" width="1.00" height="4.00" fill="#ffb6c1" stroke="#de9058" stroke-width="0.6"/><rect x="880.80" y="481.00" width="1.00" height="4.00" fill="#ffb6c1" stroke="#de9058" stroke-width="0.6"/><text x="0" y="0" font-size="7.6" fill="#1c2c28" text-anchor="middle" opacity="1" transform="translate(871.00 476.80) rotate(-90) scale(0.97 1.2)">U20</text><rect x="870.40" y="488.50" width="14.20" height="8.10" fill="none" stroke="#263a26" stroke-width="1.0"/><rect x="872.10" y="490.12" width="4.54" height="4.86" fill="#ffb6c1" stroke="#de9058" stroke-width="0.6"/><rect x="878.35" y="490.12" width="4.54" height="4.86" fill="#ffb6c1" stroke="#de9058" stroke-width="0.6"/><text x="0" y="0" font-size="8" fill="#1c2c28" text-anchor="end" opacity="1" transform="translate(885.00 503.20) scale(0.97 1.2)">C49</text><text x="925.40" y="478.50" font-size="4.8" fill="#2a4050" text-anchor="middle" opacity="0.9">C46</text><rect x="921.20" y="480.30" width="8.40" height="14.00" fill="none" stroke="#263a26" stroke-width="1.0"/><rect x="923.05" y="482.26" width="4.70" height="4.20" fill="#ffb6c1" stroke="#de9058" stroke-width="0.6"/><rect x="923.05" y="488.14" width="4.70" height="4.20" fill="#ffb6c1" stroke="#de9058" stroke-width="0.6"/><text x="0" y="0" font-size="4.6" fill="#2c3c38" text-anchor="middle" opacity="0.75" transform="translate(889.80 503.60) rotate(-90)">C43</text><rect x="890.40" y="499.70" width="14.20" height="7.80" fill="none" stroke="#263a26" stroke-width="1.0"/><rect x="892.10" y="501.26" width="4.54" height="4.68" fill="#ffb6c1" stroke="#de9058" stroke-width="0.6"/><rect x="898.35" y="501.26" width="4.54" height="4.68" fill="#ffb6c1" stroke="#de9058" stroke-width="0.6"/><rect x="906.40" y="499.70" width="14.10" height="7.80" fill="none" stroke="#263a26" stroke-width="1.0"/><rect x="908.09" y="501.26" width="4.51" height="4.68" fill="#ffb6c1" stroke="#de9058" stroke-width="0.6"/><rect x="914.30" y="501.26" width="4.51" height="4.68" fill="#ffb6c1" stroke="#de9058" stroke-width="0.6"/><text x="0" y="0" font-size="8" fill="#1c2c28" text-anchor="start" opacity="1" transform="translate(920.90 506.10) scale(0.97 1.2)">C47</text><rect x="898.50" y="508.40" width="14.30" height="7.50" fill="none" stroke="#263a26" stroke-width="1.0"/><rect x="900.22" y="509.90" width="4.58" height="4.50" fill="#ffb6c1" stroke="#de9058" stroke-width="0.6"/><rect x="906.51" y="509.90" width="4.58" height="4.50" fill="#ffb6c1" stroke="#de9058" stroke-width="0.6"/><text x="0" y="0" font-size="8" fill="#2a3a58" text-anchor="end" opacity="1" transform="translate(898.00 514.20) scale(0.97 1.2)">C44</text><text x="0" y="0" font-size="8" fill="#1c2c28" text-anchor="end" opacity="1" transform="translate(953.00 461.40) scale(0.97 1.2)">TP9</text><rect x="954.10" y="450.30" width="9.70" height="17.70" fill="#ffb6c1" stroke="#de9058" stroke-width="0.5"/><rect x="953.30" y="447.90" width="11.30" height="22.50" fill="none" stroke="#263a26" stroke-width="1.0"/><text x="0" y="0" font-size="8" fill="#1c2c28" text-anchor="end" opacity="1" transform="translate(958.00 478.00) scale(0.97 1.2)">TP13</text><rect x="960.80" y="471.40" width="18.50" height="8.80" fill="#ffb6c1" stroke="#de9058" stroke-width="0.5"/><rect x="958.60" y="470.60" width="22.90" height="10.40" fill="none" stroke="#263a26" stroke-width="1.0"/><text x="0" y="0" font-size="8" fill="#1c2c28" text-anchor="end" opacity="1" transform="translate(958.00 492.00) scale(0.97 1.2)">TP12</text><rect x="960.80" y="485.10" width="18.50" height="9.60" fill="#ffb6c1" stroke="#de9058" stroke-width="0.5"/><rect x="958.60" y="484.30" width="22.90" height="11.20" fill="none" stroke="#263a26" stroke-width="1.0"/><rect x="966.40" y="457.60" width="14.00" height="7.80" fill="none" stroke="#263a26" stroke-width="1.0"/><rect x="968.08" y="459.16" width="4.48" height="4.68" fill="#ffb6c1" stroke="#de9058" stroke-width="0.6"/><rect x="974.24" y="459.16" width="4.48" height="4.68" fill="#ffb6c1" stroke="#de9058" stroke-width="0.6"/><rect x="967.60" y="438.30" width="8.90" height="18.90" fill="none" stroke="#263a26" stroke-width="1.0"/><rect x="968.80" y="440.00" width="6.50" height="6.50" fill="#ffb6c1" stroke="#de9058" stroke-width="0.6"/><rect x="968.80" y="449.00" width="6.50" height="6.50" fill="#ffb6c1" stroke="#de9058" stroke-width="0.6"/><rect x="952.50" y="438.30" width="13.90" height="7.90" fill="none" stroke="#263a26" stroke-width="1.0"/><rect x="954.17" y="439.88" width="4.45" height="4.74" fill="#ffb6c1" stroke="#de9058" stroke-width="0.6"/><rect x="960.28" y="439.88" width="4.45" height="4.74" fill="#ffb6c1" stroke="#de9058" stroke-width="0.6"/><rect x="966.40" y="429.10" width="14.00" height="8.20" fill="none" stroke="#263a26" stroke-width="1.0"/><rect x="968.08" y="430.74" width="4.48" height="4.92" fill="#ffb6c1" stroke="#de9058" stroke-width="0.6"/><rect x="974.24" y="430.74" width="4.48" height="4.92" fill="#ffb6c1" stroke="#de9058" stroke-width="0.6"/><text x="0" y="0" font-size="8" fill="#1c2c28" text-anchor="end" opacity="1" transform="translate(966.00 435.40) scale(0.97 1.2)">R4</text><text x="0" y="0" font-size="8" fill="#1c2c28" text-anchor="middle" opacity="1" transform="translate(962.20 381.80) scale(0.97 1.2)">R5</text><rect x="955.30" y="384.40" width="13.70" height="8.30" fill="none" stroke="#263a26" stroke-width="1.0"/><rect x="956.94" y="386.06" width="4.38" height="4.98" fill="#ffb6c1" stroke="#de9058" stroke-width="0.6"/><rect x="962.97" y="386.06" width="4.38" height="4.98" fill="#ffb6c1" stroke="#de9058" stroke-width="0.6"/><rect x="955.30" y="392.70" width="13.70" height="8.60" fill="none" stroke="#263a26" stroke-width="1.0"/><rect x="956.94" y="394.42" width="4.38" height="5.16" fill="#ffb6c1" stroke="#de9058" stroke-width="0.6"/><rect x="962.97" y="394.42" width="4.38" height="5.16" fill="#ffb6c1" stroke="#de9058" stroke-width="0.6"/><rect x="955.30" y="401.30" width="13.70" height="8.20" fill="none" stroke="#263a26" stroke-width="1.0"/><rect x="956.94" y="402.94" width="4.38" height="4.92" fill="#ffb6c1" stroke="#de9058" stroke-width="0.6"/><rect x="962.97" y="402.94" width="4.38" height="4.92" fill="#ffb6c1" stroke="#de9058" stroke-width="0.6"/><text x="0" y="0" font-size="8" fill="#1c2c28" text-anchor="end" opacity="1" transform="translate(955.00 399.40) scale(0.97 1.2)">R6</text><text x="0" y="0" font-size="8" fill="#1c2c28" text-anchor="end" opacity="1" transform="translate(955.00 407.50) scale(0.97 1.2)">R7</text><text x="0" y="0" font-size="8" fill="#1c2c28" text-anchor="middle" opacity="1" transform="translate(978.90 376.80) scale(0.97 1.2)">C3</text><rect x="972.40" y="378.90" width="13.30" height="8.20" fill="none" stroke="#263a26" stroke-width="1.0"/><rect x="974.00" y="380.54" width="4.26" height="4.92" fill="#ffb6c1" stroke="#de9058" stroke-width="0.6"/><rect x="979.85" y="380.54" width="4.26" height="4.92" fill="#ffb6c1" stroke="#de9058" stroke-width="0.6"/><rect x="971.60" y="388.00" width="17.10" height="23.60" fill="none" stroke="#263a26" stroke-width="1.0"/><rect x="974.50" y="391.50" width="2.30" height="5.00" fill="#ffb6c1" stroke="#de9058" stroke-width="0.6"/><rect x="983.00" y="391.50" width="2.30" height="5.00" fill="#ffb6c1" stroke="#de9058" stroke-width="0.6"/><rect x="974.30" y="403.00" width="2.70" height="5.00" fill="#ffb6c1" stroke="#de9058" stroke-width="0.6"/><rect x="978.50" y="403.00" width="2.70" height="5.00" fill="#ffb6c1" stroke="#de9058" stroke-width="0.6"/><rect x="982.70" y="403.00" width="2.70" height="5.00" fill="#ffb6c1" stroke="#de9058" stroke-width="0.6"/><text x="0" y="0" font-size="8" fill="#1c2c28" text-anchor="start" opacity="1" transform="translate(989.20 402.70) scale(0.97 1.2)">U1</text><text x="0" y="0" font-size="8" fill="#1c2c28" text-anchor="end" opacity="1" transform="translate(1016.50 402.70) scale(0.97 1.2)">R10</text><rect x="1016.50" y="393.20" width="8.20" height="14.20" fill="none" stroke="#263a26" stroke-width="1.0"/><rect x="1018.30" y="395.19" width="4.59" height="4.26" fill="#ffb6c1" stroke="#de9058" stroke-width="0.6"/><rect x="1018.30" y="401.15" width="4.59" height="4.26" fill="#ffb6c1" stroke="#de9058" stroke-width="0.6"/><rect x="968.20" y="412.30" width="19.30" height="9.40" fill="none" stroke="#263a26" stroke-width="1.0"/><rect x="970.52" y="414.18" width="6.18" height="5.64" fill="#ffb6c1" stroke="#de9058" stroke-width="0.6"/><rect x="979.01" y="414.18" width="6.18" height="5.64" fill="#ffb6c1" stroke="#de9058" stroke-width="0.6"/><text x="0" y="0" font-size="8" fill="#1c2c28" text-anchor="end" opacity="1" transform="translate(968.00 419.30) scale(0.97 1.2)">C5</text><text x="1021.00" y="367.00" font-size="4.8" fill="#2a4050" text-anchor="middle" opacity="0.9">TP19</text><rect x="1016.10" y="371.10" width="9.80" height="18.00" fill="#ffb6c1" stroke="#de9058" stroke-width="0.5"/><rect x="1015.30" y="368.70" width="11.40" height="22.80" fill="none" stroke="#263a26" stroke-width="1.0"/><text x="0" y="0" font-size="8" fill="#1c2c28" text-anchor="middle" opacity="1" transform="translate(1040.70 379.20) scale(0.97 1.2)">C11</text><rect x="1034.00" y="381.30" width="13.50" height="8.60" fill="none" stroke="#263a26" stroke-width="1.0"/><rect x="1035.62" y="383.02" width="4.32" height="5.16" fill="#ffb6c1" stroke="#de9058" stroke-width="0.6"/><rect x="1041.56" y="383.02" width="4.32" height="5.16" fill="#ffb6c1" stroke="#de9058" stroke-width="0.6"/><rect x="1029.40" y="390.30" width="18.30" height="21.30" fill="none" stroke="#263a26" stroke-width="1.0"/><rect x="1031.50" y="392.00" width="6.00" height="8.00" fill="#ffb6c1" stroke="#de9058" stroke-width="0.6"/><rect x="1039.50" y="392.00" width="6.00" height="8.00" fill="#ffb6c1" stroke="#de9058" stroke-width="0.6"/><rect x="1031.50" y="402.00" width="6.00" height="8.00" fill="#ffb6c1" stroke="#de9058" stroke-width="0.6"/><rect x="1039.50" y="402.00" width="6.00" height="8.00" fill="#ffb6c1" stroke="#de9058" stroke-width="0.6"/><text x="0" y="0" font-size="8" fill="#1c2c28" text-anchor="middle" opacity="1" transform="translate(1039.80 418.70) scale(0.97 1.2)">U3</text><rect x="1030.60" y="422.10" width="17.10" height="23.50" fill="none" stroke="#263a26" stroke-width="1.0"/><rect x="1033.85" y="426.33" width="2.47" height="5.17" fill="#ffb6c1" stroke="#de9058" stroke-width="0.6"/><rect x="1037.38" y="426.33" width="2.47" height="5.17" fill="#ffb6c1" stroke="#de9058" stroke-width="0.6"/><rect x="1040.92" y="426.33" width="2.47" height="5.17" fill="#ffb6c1" stroke="#de9058" stroke-width="0.6"/><rect x="1033.85" y="436.20" width="2.47" height="5.17" fill="#ffb6c1" stroke="#de9058" stroke-width="0.6"/><rect x="1037.38" y="436.20" width="2.47" height="5.17" fill="#ffb6c1" stroke="#de9058" stroke-width="0.6"/><rect x="1040.92" y="436.20" width="2.47" height="5.17" fill="#ffb6c1" stroke="#de9058" stroke-width="0.6"/><text x="0" y="0" font-size="8" fill="#1c2c28" text-anchor="start" opacity="1" transform="translate(1048.30 435.80) scale(0.97 1.2)">U4</text><text x="0" y="0" font-size="8" fill="#1c2c28" text-anchor="middle" opacity="1" transform="translate(998.20 424.20) scale(0.97 1.2)">U2</text><rect x="983.40" y="426.60" width="29.20" height="28.90" fill="none" stroke="#263a26" stroke-width="1.0"/><rect x="989.60" y="429.6" width="1.3" height="3.6" fill="#ffb6c1" stroke="#e0904e" stroke-width="0.5"/><rect x="989.60" y="450.4" width="1.3" height="3.6" fill="#ffb6c1" stroke="#e0904e" stroke-width="0.5"/><rect x="991.45" y="429.6" width="1.3" height="3.6" fill="#ffb6c1" stroke="#e0904e" stroke-width="0.5"/><rect x="991.45" y="450.4" width="1.3" height="3.6" fill="#ffb6c1" stroke="#e0904e" stroke-width="0.5"/><rect x="993.30" y="429.6" width="1.3" height="3.6" fill="#ffb6c1" stroke="#e0904e" stroke-width="0.5"/><rect x="993.30" y="450.4" width="1.3" height="3.6" fill="#ffb6c1" stroke="#e0904e" stroke-width="0.5"/><rect x="995.15" y="429.6" width="1.3" height="3.6" fill="#ffb6c1" stroke="#e0904e" stroke-width="0.5"/><rect x="995.15" y="450.4" width="1.3" height="3.6" fill="#ffb6c1" stroke="#e0904e" stroke-width="0.5"/><rect x="997.00" y="429.6" width="1.3" height="3.6" fill="#ffb6c1" stroke="#e0904e" stroke-width="0.5"/><rect x="997.00" y="450.4" width="1.3" height="3.6" fill="#ffb6c1" stroke="#e0904e" stroke-width="0.5"/><rect x="998.85" y="429.6" width="1.3" height="3.6" fill="#ffb6c1" stroke="#e0904e" stroke-width="0.5"/><rect x="998.85" y="450.4" width="1.3" height="3.6" fill="#ffb6c1" stroke="#e0904e" stroke-width="0.5"/><rect x="1000.70" y="429.6" width="1.3" height="3.6" fill="#ffb6c1" stroke="#e0904e" stroke-width="0.5"/><rect x="1000.70" y="450.4" width="1.3" height="3.6" fill="#ffb6c1" stroke="#e0904e" stroke-width="0.5"/><rect x="1002.55" y="429.6" width="1.3" height="3.6" fill="#ffb6c1" stroke="#e0904e" stroke-width="0.5"/><rect x="1002.55" y="450.4" width="1.3" height="3.6" fill="#ffb6c1" stroke="#e0904e" stroke-width="0.5"/><rect x="1004.40" y="429.6" width="1.3" height="3.6" fill="#ffb6c1" stroke="#e0904e" stroke-width="0.5"/><rect x="1004.40" y="450.4" width="1.3" height="3.6" fill="#ffb6c1" stroke="#e0904e" stroke-width="0.5"/><rect x="985" y="433.00" width="3.8" height="1.2" fill="#ffb6c1" stroke="#e0904e" stroke-width="0.5"/><rect x="1007.2" y="433.00" width="3.8" height="1.2" fill="#ffb6c1" stroke="#e0904e" stroke-width="0.5"/><rect x="985" y="434.78" width="3.8" height="1.2" fill="#ffb6c1" stroke="#e0904e" stroke-width="0.5"/><rect x="1007.2" y="434.78" width="3.8" height="1.2" fill="#ffb6c1" stroke="#e0904e" stroke-width="0.5"/><rect x="985" y="436.56" width="3.8" height="1.2" fill="#ffb6c1" stroke="#e0904e" stroke-width="0.5"/><rect x="1007.2" y="436.56" width="3.8" height="1.2" fill="#ffb6c1" stroke="#e0904e" stroke-width="0.5"/><rect x="985" y="438.34" width="3.8" height="1.2" fill="#ffb6c1" stroke="#e0904e" stroke-width="0.5"/><rect x="1007.2" y="438.34" width="3.8" height="1.2" fill="#ffb6c1" stroke="#e0904e" stroke-width="0.5"/><rect x="985" y="440.12" width="3.8" height="1.2" fill="#ffb6c1" stroke="#e0904e" stroke-width="0.5"/><rect x="1007.2" y="440.12" width="3.8" height="1.2" fill="#ffb6c1" stroke="#e0904e" stroke-width="0.5"/><rect x="985" y="441.90" width="3.8" height="1.2" fill="#ffb6c1" stroke="#e0904e" stroke-width="0.5"/><rect x="1007.2" y="441.90" width="3.8" height="1.2" fill="#ffb6c1" stroke="#e0904e" stroke-width="0.5"/><rect x="985" y="443.68" width="3.8" height="1.2" fill="#ffb6c1" stroke="#e0904e" stroke-width="0.5"/><rect x="1007.2" y="443.68" width="3.8" height="1.2" fill="#ffb6c1" stroke="#e0904e" stroke-width="0.5"/><rect x="985" y="445.46" width="3.8" height="1.2" fill="#ffb6c1" stroke="#e0904e" stroke-width="0.5"/><rect x="1007.2" y="445.46" width="3.8" height="1.2" fill="#ffb6c1" stroke="#e0904e" stroke-width="0.5"/><rect x="985" y="447.24" width="3.8" height="1.2" fill="#ffb6c1" stroke="#e0904e" stroke-width="0.5"/><rect x="1007.2" y="447.24" width="3.8" height="1.2" fill="#ffb6c1" stroke="#e0904e" stroke-width="0.5"/><rect x="985" y="449.02" width="3.8" height="1.2" fill="#ffb6c1" stroke="#e0904e" stroke-width="0.5"/><rect x="1007.2" y="449.02" width="3.8" height="1.2" fill="#ffb6c1" stroke="#e0904e" stroke-width="0.5"/><circle cx="997.80" cy="441.20" r="2.50" fill="#b8860b"/><text x="0" y="0" font-size="8" fill="#1c2c28" text-anchor="middle" opacity="1" transform="translate(1021.00 432.70) scale(0.97 1.2)">R11</text><rect x="1014.30" y="435.20" width="13.90" height="8.40" fill="none" stroke="#263a26" stroke-width="1.0"/><rect x="1015.97" y="436.88" width="4.45" height="5.04" fill="#ffb6c1" stroke="#de9058" stroke-width="0.6"/><rect x="1022.08" y="436.88" width="4.45" height="5.04" fill="#ffb6c1" stroke="#de9058" stroke-width="0.6"/><rect x="1014.30" y="443.60" width="13.90" height="7.80" fill="none" stroke="#263a26" stroke-width="1.0"/><rect x="1015.97" y="445.16" width="4.45" height="4.68" fill="#ffb6c1" stroke="#de9058" stroke-width="0.6"/><rect x="1022.08" y="445.16" width="4.45" height="4.68" fill="#ffb6c1" stroke="#de9058" stroke-width="0.6"/><text x="0" y="0" font-size="8" fill="#1c2c28" text-anchor="middle" opacity="1" transform="translate(1021.30 458.40) scale(0.97 1.2)">C10</text><rect x="1030.60" y="446.20" width="13.90" height="8.10" fill="none" stroke="#263a26" stroke-width="1.0"/><rect x="1032.27" y="447.82" width="4.45" height="4.86" fill="#ffb6c1" stroke="#de9058" stroke-width="0.6"/><rect x="1038.38" y="447.82" width="4.45" height="4.86" fill="#ffb6c1" stroke="#de9058" stroke-width="0.6"/><text x="0" y="0" font-size="8" fill="#1c2c28" text-anchor="middle" opacity="1" transform="translate(1038.00 461.30) scale(0.97 1.2)">C13</text><text x="1000.00" y="461.80" font-size="4.8" fill="#2a4050" text-anchor="middle" opacity="0.9">C14</text><rect x="983.30" y="463.40" width="8.35" height="13.70" fill="none" stroke="#263a26" stroke-width="1.0"/><rect x="985.14" y="465.32" width="4.68" height="4.11" fill="#ffb6c1" stroke="#de9058" stroke-width="0.6"/><rect x="985.14" y="471.07" width="4.68" height="4.11" fill="#ffb6c1" stroke="#de9058" stroke-width="0.6"/><rect x="983.30" y="477.10" width="8.35" height="13.80" fill="none" stroke="#263a26" stroke-width="1.0"/><rect x="985.14" y="479.03" width="4.68" height="4.14" fill="#ffb6c1" stroke="#de9058" stroke-width="0.6"/><rect x="985.14" y="484.83" width="4.68" height="4.14" fill="#ffb6c1" stroke="#de9058" stroke-width="0.6"/><rect x="991.65" y="463.40" width="8.35" height="13.70" fill="none" stroke="#263a26" stroke-width="1.0"/><rect x="993.49" y="465.32" width="4.68" height="4.11" fill="#ffb6c1" stroke="#de9058" stroke-width="0.6"/><rect x="993.49" y="471.07" width="4.68" height="4.11" fill="#ffb6c1" stroke="#de9058" stroke-width="0.6"/><rect x="991.65" y="477.10" width="8.35" height="13.80" fill="none" stroke="#263a26" stroke-width="1.0"/><rect x="993.49" y="479.03" width="4.68" height="4.14" fill="#ffb6c1" stroke="#de9058" stroke-width="0.6"/><rect x="993.49" y="484.83" width="4.68" height="4.14" fill="#ffb6c1" stroke="#de9058" stroke-width="0.6"/><rect x="1000.00" y="463.40" width="8.35" height="13.70" fill="none" stroke="#263a26" stroke-width="1.0"/><rect x="1001.84" y="465.32" width="4.68" height="4.11" fill="#ffb6c1" stroke="#de9058" stroke-width="0.6"/><rect x="1001.84" y="471.07" width="4.68" height="4.11" fill="#ffb6c1" stroke="#de9058" stroke-width="0.6"/><rect x="1000.00" y="477.10" width="8.35" height="13.80" fill="none" stroke="#263a26" stroke-width="1.0"/><rect x="1001.84" y="479.03" width="4.68" height="4.14" fill="#ffb6c1" stroke="#de9058" stroke-width="0.6"/><rect x="1001.84" y="484.83" width="4.68" height="4.14" fill="#ffb6c1" stroke="#de9058" stroke-width="0.6"/><rect x="1008.35" y="463.40" width="8.35" height="13.70" fill="none" stroke="#263a26" stroke-width="1.0"/><rect x="1010.19" y="465.32" width="4.68" height="4.11" fill="#ffb6c1" stroke="#de9058" stroke-width="0.6"/><rect x="1010.19" y="471.07" width="4.68" height="4.11" fill="#ffb6c1" stroke="#de9058" stroke-width="0.6"/><rect x="1008.35" y="477.10" width="8.35" height="13.80" fill="none" stroke="#263a26" stroke-width="1.0"/><rect x="1010.19" y="479.03" width="4.68" height="4.14" fill="#ffb6c1" stroke="#de9058" stroke-width="0.6"/><rect x="1010.19" y="484.83" width="4.68" height="4.14" fill="#ffb6c1" stroke="#de9058" stroke-width="0.6"/><text x="0" y="0" font-size="8" fill="#1c2c28" text-anchor="middle" opacity="1" transform="translate(1035.00 478.50) scale(0.97 1.2)">TP20</text><rect x="1025.50" y="482.40" width="19.10" height="9.40" fill="#ffb6c1" stroke="#de9058" stroke-width="0.5"/><rect x="1023.30" y="481.60" width="23.50" height="11.00" fill="none" stroke="#263a26" stroke-width="1.0"/><text x="0" y="0" font-size="8" fill="#1c2c28" text-anchor="end" opacity="1" transform="translate(989.00 512.90) scale(0.97 1.2)">U5</text><rect x="989.30" y="495.50" width="38.50" height="30.10" fill="none" stroke="#263a26" stroke-width="1.0"/><rect x="1002.50" y="498.00" width="1.80" height="6.70" fill="#ffb6c1" stroke="#de9058" stroke-width="0.6"/><rect x="1002.50" y="516.10" width="1.80" height="7.40" fill="#ffb6c1" stroke="#de9058" stroke-width="0.6"/><rect x="1005.50" y="498.00" width="1.80" height="6.70" fill="#ffb6c1" stroke="#de9058" stroke-width="0.6"/><rect x="1005.50" y="516.10" width="1.80" height="7.40" fill="#ffb6c1" stroke="#de9058" stroke-width="0.6"/><rect x="1008.50" y="498.00" width="1.80" height="6.70" fill="#ffb6c1" stroke="#de9058" stroke-width="0.6"/><rect x="1008.50" y="516.10" width="1.80" height="7.40" fill="#ffb6c1" stroke="#de9058" stroke-width="0.6"/><rect x="1011.50" y="498.00" width="1.80" height="6.70" fill="#ffb6c1" stroke="#de9058" stroke-width="0.6"/><rect x="1011.50" y="516.10" width="1.80" height="7.40" fill="#ffb6c1" stroke="#de9058" stroke-width="0.6"/><text x="0" y="0" font-size="7.4" fill="#1c2c28" text-anchor="middle" opacity="1" transform="translate(1041.50 313.50) scale(0.97 1.2)">MH3</text><rect x="1033.00" y="315.60" width="16.90" height="15.90" fill="none" stroke="#263a26" stroke-width="1.0"/><circle cx="1041.50" cy="323.50" r="7.50" fill="#b8860b"/><text x="1040.50" y="339.00" font-size="4.8" fill="#2a4050" text-anchor="middle" opacity="0.9">FM2</text><rect x="1037.2" y="340" width="6.5" height="7" fill="none" stroke="#5a8a5a" stroke-width="0.6"/><path d="M1040.45 340 V347 M1037.2 343.5 H1043.7" stroke="#c8801a" stroke-width="0.9"/><text x="1041.00" y="552.00" font-size="4.8" fill="#2a4050" text-anchor="middle" opacity="0.9">FM3</text><rect x="1037.5" y="553.5" width="6.5" height="7" fill="none" stroke="#5a8a5a" stroke-width="0.6"/><path d="M1040.75 553.5 V560.5 M1037.5 557.0 H1044.0" stroke="#c8801a" stroke-width="0.9"/><rect x="1033.20" y="568.20" width="16.60" height="16.30" fill="none" stroke="#263a26" stroke-width="1.0"/><circle cx="1041.50" cy="576.30" r="7.60" fill="#b8860b"/><text x="0" y="0" font-size="7.4" fill="#2a3a58" text-anchor="middle" opacity="1" transform="translate(1041.50 591.00) scale(0.97 1.2)">MH2</text></svg>
</body></html>
